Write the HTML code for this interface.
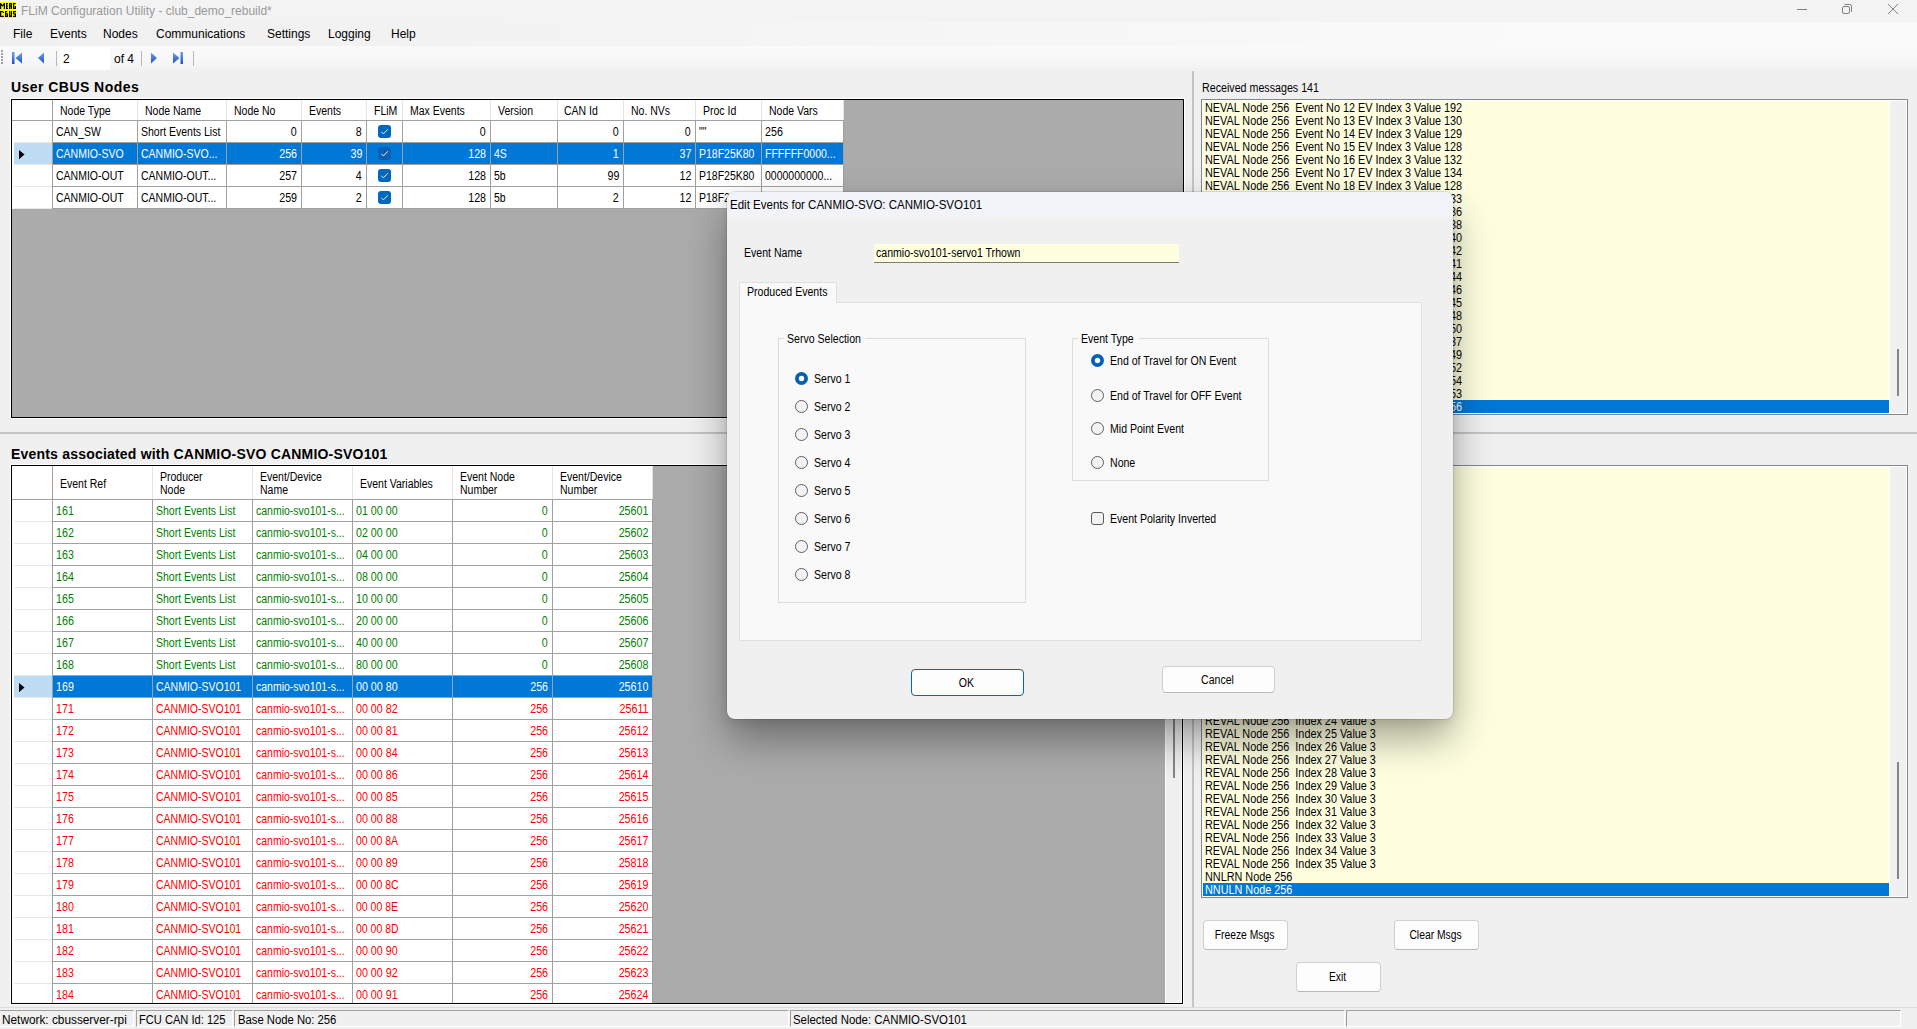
<!DOCTYPE html><html><head><meta charset="utf-8"><style>
*{box-sizing:border-box}
html,body{margin:0;padding:0}
body{width:1917px;height:1029px;position:relative;overflow:hidden;background:#f0f0f0;font-family:"Liberation Sans",sans-serif}
.t{position:absolute;white-space:pre;line-height:1}
.r{position:absolute}
</style></head><body><div class="r" style="left:0px;top:0px;width:1917px;height:22px;background:#f3f3f3;"></div>
<svg class="r" style="left:0;top:2px" width="16" height="16" viewBox="0 2 16 16"><rect x="0" y="2" width="16" height="16" fill="#ffff00"/><g fill="none" stroke="#000" stroke-width="1.25"><path d="M0.6 3V9M4.4 3V9M0.6 3.6L2.5 5.8L4.4 3.6"/><path d="M6.6 3V9M6.6 3.6H8M6.6 6H7.8M6.6 8.4H8"/><path d="M9.6 3V9M11.4 3V9M9.6 3.6H11.4M9.6 6.2H11.4"/><path d="M13.6 3V9M13.6 3.6H15.6M13.6 8.4H15.4M15.4 6V9"/><path d="M0.6 11V17M0.6 11.6H3.2M0.6 16.4H3.8M3.4 12V13"/><path d="M5.6 11V17M5.6 11.6H7.2M5.6 13.9H7.6M5.6 16.4H7.6M7.4 13.5V17"/><path d="M9.6 11V17M11.4 11V17M9.6 16.4H11.4"/><path d="M13 11.6H16M13.6 11V14.2M13.6 13.9H15.4M15.4 13.5V17M13 16.4H15.6"/></g></svg>
<div class="t" style="left:21px;top:5px;font-size:12px;color:#999;">FLiM Configuration Utility - club_demo_rebuild*</div>
<div class="r" style="left:1797px;top:9px;width:10px;height:1px;background:#808080;"></div>
<svg class="r" style="left:1840px;top:2px" width="14" height="14" viewBox="0 0 14 14"><rect x="2.5" y="4.5" width="7" height="7" rx="1.5" fill="none" stroke="#808080" stroke-width="1"/><path d="M4.5 2.5H9.8A1.7 1.7 0 0 1 11.5 4.2V9.8" fill="none" stroke="#808080" stroke-width="1"/></svg>
<svg class="r" style="left:1886px;top:2px" width="14" height="14" viewBox="0 0 14 14"><path d="M2 2L12 12M12 2L2 12" stroke="#808080" stroke-width="1"/></svg>
<div class="r" style="left:0px;top:22px;width:1917px;height:24px;background:linear-gradient(to right,#f0f0f0,#f3f3f3 30%,#fafafa 80%);"></div>
<div class="t" style="left:13px;top:28px;font-size:12px;color:#000;">File</div>
<div class="t" style="left:50px;top:28px;font-size:12px;color:#000;">Events</div>
<div class="t" style="left:103px;top:28px;font-size:12px;color:#000;">Nodes</div>
<div class="t" style="left:156px;top:28px;font-size:12px;color:#000;">Communications</div>
<div class="t" style="left:267px;top:28px;font-size:12px;color:#000;">Settings</div>
<div class="t" style="left:328px;top:28px;font-size:12px;color:#000;">Logging</div>
<div class="t" style="left:391px;top:28px;font-size:12px;color:#000;">Help</div>
<div class="r" style="left:0px;top:46px;width:1917px;height:25px;background:linear-gradient(to bottom,#fafafa,#f7f7f7 60%,#f0f0f0);"></div>
<div class="r" style="left:1px;top:50px;width:2px;height:2px;background:#a0a0a0;"></div>
<div class="r" style="left:1px;top:53px;width:2px;height:2px;background:#a0a0a0;"></div>
<div class="r" style="left:1px;top:56px;width:2px;height:2px;background:#a0a0a0;"></div>
<div class="r" style="left:1px;top:59px;width:2px;height:2px;background:#a0a0a0;"></div>
<div class="r" style="left:1px;top:62px;width:2px;height:2px;background:#a0a0a0;"></div>
<svg class="r" style="left:11px;top:51px" width="12" height="14" viewBox="0 0 12 14"><defs><linearGradient id="bg1" x1="0" y1="0" x2="0" y2="1"><stop offset="0" stop-color="#6fa0f0"/><stop offset="1" stop-color="#1f50c8"/></linearGradient></defs><rect x="1" y="1" width="2.5" height="12" fill="url(#bg1)"/><path d="M11 1.5V12.5L4.5 7Z" fill="url(#bg1)"/></svg>
<svg class="r" style="left:37px;top:51px" width="9" height="14" viewBox="0 0 9 14"><path d="M7 1.5V12.5L1 7Z" fill="url(#bg1)"/></svg>
<div class="r" style="left:56px;top:51px;width:1px;height:15px;background:#b8b8b8;"></div>
<div class="r" style="left:60px;top:47px;width:50px;height:23px;background:#ffffff;"></div>
<div class="t" style="left:63px;top:53px;font-size:12px;color:#000;">2</div>
<div class="t" style="left:114px;top:53px;font-size:12px;color:#000;">of 4</div>
<div class="r" style="left:141px;top:51px;width:1px;height:15px;background:#b8b8b8;"></div>
<svg class="r" style="left:150px;top:51px" width="9" height="14" viewBox="0 0 9 14"><path d="M1 1.5V12.5L7 7Z" fill="url(#bg1)"/></svg>
<svg class="r" style="left:172px;top:51px" width="12" height="14" viewBox="0 0 12 14"><rect x="8.5" y="1" width="2.5" height="12" fill="url(#bg1)"/><path d="M1 1.5V12.5L7.5 7Z" fill="url(#bg1)"/></svg>
<div class="r" style="left:193px;top:51px;width:1px;height:15px;background:#b8b8b8;"></div>
<div class="r" style="left:1192px;top:71px;width:2px;height:936px;background:#c4c4c4;"></div>
<div class="r" style="left:0px;top:432px;width:1192px;height:2px;background:#c4c4c4;"></div>
<div class="r" style="left:1194px;top:432px;width:723px;height:2px;background:#c4c4c4;"></div>
<div class="t" style="left:11px;top:80px;font-size:14px;color:#000;font-weight:bold;letter-spacing:0.45px;">User CBUS Nodes</div>
<div class="r" style="left:10px;top:98px;width:1175px;height:321px;background:#ffffff;"></div>
<div class="r" style="left:11px;top:99px;width:1173px;height:319px;background:#000;"></div>
<div class="r" style="left:12px;top:100px;width:1171px;height:317px;background:#ababab;"></div>
<div class="r" style="left:12px;top:100px;width:832px;height:20px;background:#ffffff;"></div>
<div class="r" style="left:12px;top:120px;width:832px;height:1px;background:#a0a0a0;"></div>
<div class="r" style="left:52px;top:100px;width:1px;height:20px;background:#a0a0a0;"></div>
<div class="r" style="left:137px;top:100px;width:1px;height:20px;background:#e5e5e5;"></div>
<div class="r" style="left:226px;top:100px;width:1px;height:20px;background:#e5e5e5;"></div>
<div class="r" style="left:301px;top:100px;width:1px;height:20px;background:#e5e5e5;"></div>
<div class="r" style="left:366px;top:100px;width:1px;height:20px;background:#e5e5e5;"></div>
<div class="r" style="left:402px;top:100px;width:1px;height:20px;background:#e5e5e5;"></div>
<div class="r" style="left:490px;top:100px;width:1px;height:20px;background:#e5e5e5;"></div>
<div class="r" style="left:557px;top:100px;width:1px;height:20px;background:#e5e5e5;"></div>
<div class="r" style="left:623px;top:100px;width:1px;height:20px;background:#e5e5e5;"></div>
<div class="r" style="left:695px;top:100px;width:1px;height:20px;background:#e5e5e5;"></div>
<div class="r" style="left:761px;top:100px;width:1px;height:20px;background:#e5e5e5;"></div>
<div class="r" style="left:843px;top:100px;width:1px;height:20px;background:#e5e5e5;"></div>
<div class="r" style="left:12px;top:121px;width:40px;height:22px;background:#ffffff;"></div>
<div class="r" style="left:14px;top:142px;width:38px;height:1px;background:#e8e8e8;"></div>
<div class="r" style="left:53px;top:121px;width:791px;height:22px;background:#ffffff;"></div>
<div class="r" style="left:52px;top:142px;width:792px;height:1px;background:#a0a0a0;"></div>
<div class="r" style="left:52px;top:121px;width:1px;height:22px;background:#a0a0a0;"></div>
<div class="r" style="left:137px;top:121px;width:1px;height:22px;background:#a0a0a0;"></div>
<div class="r" style="left:226px;top:121px;width:1px;height:22px;background:#a0a0a0;"></div>
<div class="r" style="left:301px;top:121px;width:1px;height:22px;background:#a0a0a0;"></div>
<div class="r" style="left:366px;top:121px;width:1px;height:22px;background:#a0a0a0;"></div>
<div class="r" style="left:402px;top:121px;width:1px;height:22px;background:#a0a0a0;"></div>
<div class="r" style="left:490px;top:121px;width:1px;height:22px;background:#a0a0a0;"></div>
<div class="r" style="left:557px;top:121px;width:1px;height:22px;background:#a0a0a0;"></div>
<div class="r" style="left:623px;top:121px;width:1px;height:22px;background:#a0a0a0;"></div>
<div class="r" style="left:695px;top:121px;width:1px;height:22px;background:#a0a0a0;"></div>
<div class="r" style="left:761px;top:121px;width:1px;height:22px;background:#a0a0a0;"></div>
<div class="r" style="left:843px;top:121px;width:1px;height:22px;background:#a0a0a0;"></div>
<div class="t" style="left:56px;top:126px;font-size:12px;color:#000;transform:scaleX(0.875);transform-origin:0 0;">CAN_SW</div>
<div class="t" style="left:141px;top:126px;font-size:12px;color:#000;transform:scaleX(0.875);transform-origin:0 0;">Short Events List</div>
<div class="t" style="right:1620px;top:126px;font-size:12px;color:#000;transform:scaleX(0.89);transform-origin:100% 0;">0</div>
<div class="t" style="right:1555px;top:126px;font-size:12px;color:#000;transform:scaleX(0.89);transform-origin:100% 0;">8</div>
<svg class="r" style="left:378px;top:125px" width="13" height="13" viewBox="0 0 13 13"><rect x="0" y="0" width="13" height="13" rx="3" fill="#0067c0"/><path d="M3.3 6.8L5.4 8.9L9.8 4.3" fill="none" stroke="#fff" stroke-width="0.9"/></svg>
<div class="t" style="right:1431px;top:126px;font-size:12px;color:#000;transform:scaleX(0.89);transform-origin:100% 0;">0</div>
<div class="t" style="left:494px;top:126px;font-size:12px;color:#000;transform:scaleX(0.875);transform-origin:0 0;"></div>
<div class="t" style="right:1298px;top:126px;font-size:12px;color:#000;transform:scaleX(0.89);transform-origin:100% 0;">0</div>
<div class="t" style="right:1226px;top:126px;font-size:12px;color:#000;transform:scaleX(0.89);transform-origin:100% 0;">0</div>
<div class="t" style="left:699px;top:126px;font-size:12px;color:#000;transform:scaleX(0.875);transform-origin:0 0;">""</div>
<div class="t" style="left:765px;top:126px;font-size:12px;color:#000;transform:scaleX(0.89);transform-origin:0 0;">256</div>
<div class="r" style="left:12px;top:143px;width:40px;height:22px;background:#ffffff;"></div>
<div class="r" style="left:14px;top:143px;width:38px;height:21px;background:#bedcf3;"></div>
<svg class="r" style="left:19px;top:150px" width="6" height="10" viewBox="0 0 6 10"><path d="M0 0L5.5 4.6L0 9.2Z" fill="#000"/></svg>
<div class="r" style="left:14px;top:164px;width:38px;height:1px;background:#e8e8e8;"></div>
<div class="r" style="left:53px;top:143px;width:791px;height:22px;background:#0078d7;"></div>
<div class="r" style="left:52px;top:164px;width:792px;height:1px;background:#a0a0a0;"></div>
<div class="r" style="left:52px;top:143px;width:1px;height:22px;background:#a0a0a0;"></div>
<div class="r" style="left:137px;top:143px;width:1px;height:22px;background:#a0a0a0;"></div>
<div class="r" style="left:226px;top:143px;width:1px;height:22px;background:#a0a0a0;"></div>
<div class="r" style="left:301px;top:143px;width:1px;height:22px;background:#a0a0a0;"></div>
<div class="r" style="left:366px;top:143px;width:1px;height:22px;background:#a0a0a0;"></div>
<div class="r" style="left:402px;top:143px;width:1px;height:22px;background:#a0a0a0;"></div>
<div class="r" style="left:490px;top:143px;width:1px;height:22px;background:#a0a0a0;"></div>
<div class="r" style="left:557px;top:143px;width:1px;height:22px;background:#a0a0a0;"></div>
<div class="r" style="left:623px;top:143px;width:1px;height:22px;background:#a0a0a0;"></div>
<div class="r" style="left:695px;top:143px;width:1px;height:22px;background:#a0a0a0;"></div>
<div class="r" style="left:761px;top:143px;width:1px;height:22px;background:#a0a0a0;"></div>
<div class="r" style="left:843px;top:143px;width:1px;height:22px;background:#a0a0a0;"></div>
<div class="t" style="left:56px;top:148px;font-size:12px;color:#ffffff;transform:scaleX(0.875);transform-origin:0 0;">CANMIO-SVO</div>
<div class="t" style="left:141px;top:148px;font-size:12px;color:#ffffff;transform:scaleX(0.875);transform-origin:0 0;">CANMIO-SVO...</div>
<div class="t" style="right:1620px;top:148px;font-size:12px;color:#ffffff;transform:scaleX(0.89);transform-origin:100% 0;">256</div>
<div class="t" style="right:1555px;top:148px;font-size:12px;color:#ffffff;transform:scaleX(0.89);transform-origin:100% 0;">39</div>
<svg class="r" style="left:378px;top:147px" width="13" height="13" viewBox="0 0 13 13"><rect x="0" y="0" width="13" height="13" rx="3" fill="#0a5fb4"/><path d="M3.3 6.8L5.4 8.9L9.8 4.3" fill="none" stroke="#fff" stroke-width="0.9"/></svg>
<div class="t" style="right:1431px;top:148px;font-size:12px;color:#ffffff;transform:scaleX(0.89);transform-origin:100% 0;">128</div>
<div class="t" style="left:494px;top:148px;font-size:12px;color:#ffffff;transform:scaleX(0.875);transform-origin:0 0;">4S</div>
<div class="t" style="right:1298px;top:148px;font-size:12px;color:#ffffff;transform:scaleX(0.89);transform-origin:100% 0;">1</div>
<div class="t" style="right:1226px;top:148px;font-size:12px;color:#ffffff;transform:scaleX(0.89);transform-origin:100% 0;">37</div>
<div class="t" style="left:699px;top:148px;font-size:12px;color:#ffffff;transform:scaleX(0.875);transform-origin:0 0;">P18F25K80</div>
<div class="t" style="left:765px;top:148px;font-size:12px;color:#ffffff;transform:scaleX(0.875);transform-origin:0 0;">FFFFFF0000...</div>
<div class="r" style="left:12px;top:165px;width:40px;height:22px;background:#ffffff;"></div>
<div class="r" style="left:14px;top:186px;width:38px;height:1px;background:#e8e8e8;"></div>
<div class="r" style="left:53px;top:165px;width:791px;height:22px;background:#ffffff;"></div>
<div class="r" style="left:52px;top:186px;width:792px;height:1px;background:#a0a0a0;"></div>
<div class="r" style="left:52px;top:165px;width:1px;height:22px;background:#a0a0a0;"></div>
<div class="r" style="left:137px;top:165px;width:1px;height:22px;background:#a0a0a0;"></div>
<div class="r" style="left:226px;top:165px;width:1px;height:22px;background:#a0a0a0;"></div>
<div class="r" style="left:301px;top:165px;width:1px;height:22px;background:#a0a0a0;"></div>
<div class="r" style="left:366px;top:165px;width:1px;height:22px;background:#a0a0a0;"></div>
<div class="r" style="left:402px;top:165px;width:1px;height:22px;background:#a0a0a0;"></div>
<div class="r" style="left:490px;top:165px;width:1px;height:22px;background:#a0a0a0;"></div>
<div class="r" style="left:557px;top:165px;width:1px;height:22px;background:#a0a0a0;"></div>
<div class="r" style="left:623px;top:165px;width:1px;height:22px;background:#a0a0a0;"></div>
<div class="r" style="left:695px;top:165px;width:1px;height:22px;background:#a0a0a0;"></div>
<div class="r" style="left:761px;top:165px;width:1px;height:22px;background:#a0a0a0;"></div>
<div class="r" style="left:843px;top:165px;width:1px;height:22px;background:#a0a0a0;"></div>
<div class="t" style="left:56px;top:170px;font-size:12px;color:#000;transform:scaleX(0.875);transform-origin:0 0;">CANMIO-OUT</div>
<div class="t" style="left:141px;top:170px;font-size:12px;color:#000;transform:scaleX(0.875);transform-origin:0 0;">CANMIO-OUT...</div>
<div class="t" style="right:1620px;top:170px;font-size:12px;color:#000;transform:scaleX(0.89);transform-origin:100% 0;">257</div>
<div class="t" style="right:1555px;top:170px;font-size:12px;color:#000;transform:scaleX(0.89);transform-origin:100% 0;">4</div>
<svg class="r" style="left:378px;top:169px" width="13" height="13" viewBox="0 0 13 13"><rect x="0" y="0" width="13" height="13" rx="3" fill="#0067c0"/><path d="M3.3 6.8L5.4 8.9L9.8 4.3" fill="none" stroke="#fff" stroke-width="0.9"/></svg>
<div class="t" style="right:1431px;top:170px;font-size:12px;color:#000;transform:scaleX(0.89);transform-origin:100% 0;">128</div>
<div class="t" style="left:494px;top:170px;font-size:12px;color:#000;transform:scaleX(0.875);transform-origin:0 0;">5b</div>
<div class="t" style="right:1298px;top:170px;font-size:12px;color:#000;transform:scaleX(0.89);transform-origin:100% 0;">99</div>
<div class="t" style="right:1226px;top:170px;font-size:12px;color:#000;transform:scaleX(0.89);transform-origin:100% 0;">12</div>
<div class="t" style="left:699px;top:170px;font-size:12px;color:#000;transform:scaleX(0.875);transform-origin:0 0;">P18F25K80</div>
<div class="t" style="left:765px;top:170px;font-size:12px;color:#000;transform:scaleX(0.875);transform-origin:0 0;">0000000000...</div>
<div class="r" style="left:12px;top:187px;width:40px;height:22px;background:#ffffff;"></div>
<div class="r" style="left:14px;top:208px;width:38px;height:1px;background:#e8e8e8;"></div>
<div class="r" style="left:53px;top:187px;width:791px;height:22px;background:#ffffff;"></div>
<div class="r" style="left:52px;top:208px;width:792px;height:1px;background:#a0a0a0;"></div>
<div class="r" style="left:52px;top:187px;width:1px;height:22px;background:#a0a0a0;"></div>
<div class="r" style="left:137px;top:187px;width:1px;height:22px;background:#a0a0a0;"></div>
<div class="r" style="left:226px;top:187px;width:1px;height:22px;background:#a0a0a0;"></div>
<div class="r" style="left:301px;top:187px;width:1px;height:22px;background:#a0a0a0;"></div>
<div class="r" style="left:366px;top:187px;width:1px;height:22px;background:#a0a0a0;"></div>
<div class="r" style="left:402px;top:187px;width:1px;height:22px;background:#a0a0a0;"></div>
<div class="r" style="left:490px;top:187px;width:1px;height:22px;background:#a0a0a0;"></div>
<div class="r" style="left:557px;top:187px;width:1px;height:22px;background:#a0a0a0;"></div>
<div class="r" style="left:623px;top:187px;width:1px;height:22px;background:#a0a0a0;"></div>
<div class="r" style="left:695px;top:187px;width:1px;height:22px;background:#a0a0a0;"></div>
<div class="r" style="left:761px;top:187px;width:1px;height:22px;background:#a0a0a0;"></div>
<div class="r" style="left:843px;top:187px;width:1px;height:22px;background:#a0a0a0;"></div>
<div class="t" style="left:56px;top:192px;font-size:12px;color:#000;transform:scaleX(0.875);transform-origin:0 0;">CANMIO-OUT</div>
<div class="t" style="left:141px;top:192px;font-size:12px;color:#000;transform:scaleX(0.875);transform-origin:0 0;">CANMIO-OUT...</div>
<div class="t" style="right:1620px;top:192px;font-size:12px;color:#000;transform:scaleX(0.89);transform-origin:100% 0;">259</div>
<div class="t" style="right:1555px;top:192px;font-size:12px;color:#000;transform:scaleX(0.89);transform-origin:100% 0;">2</div>
<svg class="r" style="left:378px;top:191px" width="13" height="13" viewBox="0 0 13 13"><rect x="0" y="0" width="13" height="13" rx="3" fill="#0067c0"/><path d="M3.3 6.8L5.4 8.9L9.8 4.3" fill="none" stroke="#fff" stroke-width="0.9"/></svg>
<div class="t" style="right:1431px;top:192px;font-size:12px;color:#000;transform:scaleX(0.89);transform-origin:100% 0;">128</div>
<div class="t" style="left:494px;top:192px;font-size:12px;color:#000;transform:scaleX(0.875);transform-origin:0 0;">5b</div>
<div class="t" style="right:1298px;top:192px;font-size:12px;color:#000;transform:scaleX(0.89);transform-origin:100% 0;">2</div>
<div class="t" style="right:1226px;top:192px;font-size:12px;color:#000;transform:scaleX(0.89);transform-origin:100% 0;">12</div>
<div class="t" style="left:699px;top:192px;font-size:12px;color:#000;transform:scaleX(0.875);transform-origin:0 0;">P18F25K80</div>
<div class="t" style="left:765px;top:192px;font-size:12px;color:#000;transform:scaleX(0.875);transform-origin:0 0;">0000000000...</div>
<div class="t" style="left:60px;top:105px;font-size:12px;color:#000;transform:scaleX(0.875);transform-origin:0 0;">Node Type</div>
<div class="t" style="left:145px;top:105px;font-size:12px;color:#000;transform:scaleX(0.875);transform-origin:0 0;">Node Name</div>
<div class="t" style="left:234px;top:105px;font-size:12px;color:#000;transform:scaleX(0.875);transform-origin:0 0;">Node No</div>
<div class="t" style="left:309px;top:105px;font-size:12px;color:#000;transform:scaleX(0.875);transform-origin:0 0;">Events</div>
<div class="t" style="left:374px;top:105px;font-size:12px;color:#000;transform:scaleX(0.875);transform-origin:0 0;">FLiM</div>
<div class="t" style="left:410px;top:105px;font-size:12px;color:#000;transform:scaleX(0.875);transform-origin:0 0;">Max Events</div>
<div class="t" style="left:498px;top:105px;font-size:12px;color:#000;transform:scaleX(0.875);transform-origin:0 0;">Version</div>
<div class="t" style="left:564px;top:105px;font-size:12px;color:#000;transform:scaleX(0.875);transform-origin:0 0;">CAN Id</div>
<div class="t" style="left:631px;top:105px;font-size:12px;color:#000;transform:scaleX(0.875);transform-origin:0 0;">No. NVs</div>
<div class="t" style="left:703px;top:105px;font-size:12px;color:#000;transform:scaleX(0.875);transform-origin:0 0;">Proc Id</div>
<div class="t" style="left:769px;top:105px;font-size:12px;color:#000;transform:scaleX(0.875);transform-origin:0 0;">Node Vars</div>
<div class="t" style="left:11px;top:447px;font-size:14px;color:#000;font-weight:bold;letter-spacing:0.2px;">Events associated with CANMIO-SVO CANMIO-SVO101</div>
<div class="r" style="left:10px;top:464px;width:1174px;height:541px;background:#ffffff;"></div>
<div class="r" style="left:11px;top:465px;width:1172px;height:539px;background:#000;"></div>
<div class="r" style="left:12px;top:466px;width:1170px;height:537px;background:#ababab;"></div>
<div class="r" style="left:12px;top:466px;width:641px;height:33px;background:#ffffff;"></div>
<div class="r" style="left:12px;top:499px;width:641px;height:1px;background:#a0a0a0;"></div>
<div class="r" style="left:52px;top:466px;width:1px;height:33px;background:#a0a0a0;"></div>
<div class="r" style="left:152px;top:466px;width:1px;height:33px;background:#e5e5e5;"></div>
<div class="r" style="left:252px;top:466px;width:1px;height:33px;background:#e5e5e5;"></div>
<div class="r" style="left:352px;top:466px;width:1px;height:33px;background:#e5e5e5;"></div>
<div class="r" style="left:452px;top:466px;width:1px;height:33px;background:#e5e5e5;"></div>
<div class="r" style="left:552px;top:466px;width:1px;height:33px;background:#e5e5e5;"></div>
<div class="r" style="left:652px;top:466px;width:1px;height:33px;background:#e5e5e5;"></div>
<div class="r" style="left:12px;top:500px;width:40px;height:22px;background:#ffffff;"></div>
<div class="r" style="left:14px;top:521px;width:38px;height:1px;background:#e8e8e8;"></div>
<div class="r" style="left:53px;top:500px;width:600px;height:22px;background:#ffffff;"></div>
<div class="r" style="left:52px;top:521px;width:601px;height:1px;background:#a0a0a0;"></div>
<div class="r" style="left:52px;top:500px;width:1px;height:22px;background:#a0a0a0;"></div>
<div class="r" style="left:152px;top:500px;width:1px;height:22px;background:#a0a0a0;"></div>
<div class="r" style="left:252px;top:500px;width:1px;height:22px;background:#a0a0a0;"></div>
<div class="r" style="left:352px;top:500px;width:1px;height:22px;background:#a0a0a0;"></div>
<div class="r" style="left:452px;top:500px;width:1px;height:22px;background:#a0a0a0;"></div>
<div class="r" style="left:552px;top:500px;width:1px;height:22px;background:#a0a0a0;"></div>
<div class="r" style="left:652px;top:500px;width:1px;height:22px;background:#a0a0a0;"></div>
<div class="t" style="left:56px;top:505px;font-size:12px;color:#008000;transform:scaleX(0.89);transform-origin:0 0;">161</div>
<div class="t" style="left:156px;top:505px;font-size:12px;color:#008000;transform:scaleX(0.875);transform-origin:0 0;">Short Events List</div>
<div class="t" style="left:256px;top:505px;font-size:12px;color:#008000;transform:scaleX(0.875);transform-origin:0 0;">canmio-svo101-s...</div>
<div class="t" style="left:356px;top:505px;font-size:12px;color:#008000;transform:scaleX(0.89);transform-origin:0 0;">01 00 00</div>
<div class="t" style="right:1369px;top:505px;font-size:12px;color:#008000;transform:scaleX(0.89);transform-origin:100% 0;">0</div>
<div class="t" style="right:1269px;top:505px;font-size:12px;color:#008000;transform:scaleX(0.89);transform-origin:100% 0;">25601</div>
<div class="r" style="left:12px;top:522px;width:40px;height:22px;background:#ffffff;"></div>
<div class="r" style="left:14px;top:543px;width:38px;height:1px;background:#e8e8e8;"></div>
<div class="r" style="left:53px;top:522px;width:600px;height:22px;background:#ffffff;"></div>
<div class="r" style="left:52px;top:543px;width:601px;height:1px;background:#a0a0a0;"></div>
<div class="r" style="left:52px;top:522px;width:1px;height:22px;background:#a0a0a0;"></div>
<div class="r" style="left:152px;top:522px;width:1px;height:22px;background:#a0a0a0;"></div>
<div class="r" style="left:252px;top:522px;width:1px;height:22px;background:#a0a0a0;"></div>
<div class="r" style="left:352px;top:522px;width:1px;height:22px;background:#a0a0a0;"></div>
<div class="r" style="left:452px;top:522px;width:1px;height:22px;background:#a0a0a0;"></div>
<div class="r" style="left:552px;top:522px;width:1px;height:22px;background:#a0a0a0;"></div>
<div class="r" style="left:652px;top:522px;width:1px;height:22px;background:#a0a0a0;"></div>
<div class="t" style="left:56px;top:527px;font-size:12px;color:#008000;transform:scaleX(0.89);transform-origin:0 0;">162</div>
<div class="t" style="left:156px;top:527px;font-size:12px;color:#008000;transform:scaleX(0.875);transform-origin:0 0;">Short Events List</div>
<div class="t" style="left:256px;top:527px;font-size:12px;color:#008000;transform:scaleX(0.875);transform-origin:0 0;">canmio-svo101-s...</div>
<div class="t" style="left:356px;top:527px;font-size:12px;color:#008000;transform:scaleX(0.89);transform-origin:0 0;">02 00 00</div>
<div class="t" style="right:1369px;top:527px;font-size:12px;color:#008000;transform:scaleX(0.89);transform-origin:100% 0;">0</div>
<div class="t" style="right:1269px;top:527px;font-size:12px;color:#008000;transform:scaleX(0.89);transform-origin:100% 0;">25602</div>
<div class="r" style="left:12px;top:544px;width:40px;height:22px;background:#ffffff;"></div>
<div class="r" style="left:14px;top:565px;width:38px;height:1px;background:#e8e8e8;"></div>
<div class="r" style="left:53px;top:544px;width:600px;height:22px;background:#ffffff;"></div>
<div class="r" style="left:52px;top:565px;width:601px;height:1px;background:#a0a0a0;"></div>
<div class="r" style="left:52px;top:544px;width:1px;height:22px;background:#a0a0a0;"></div>
<div class="r" style="left:152px;top:544px;width:1px;height:22px;background:#a0a0a0;"></div>
<div class="r" style="left:252px;top:544px;width:1px;height:22px;background:#a0a0a0;"></div>
<div class="r" style="left:352px;top:544px;width:1px;height:22px;background:#a0a0a0;"></div>
<div class="r" style="left:452px;top:544px;width:1px;height:22px;background:#a0a0a0;"></div>
<div class="r" style="left:552px;top:544px;width:1px;height:22px;background:#a0a0a0;"></div>
<div class="r" style="left:652px;top:544px;width:1px;height:22px;background:#a0a0a0;"></div>
<div class="t" style="left:56px;top:549px;font-size:12px;color:#008000;transform:scaleX(0.89);transform-origin:0 0;">163</div>
<div class="t" style="left:156px;top:549px;font-size:12px;color:#008000;transform:scaleX(0.875);transform-origin:0 0;">Short Events List</div>
<div class="t" style="left:256px;top:549px;font-size:12px;color:#008000;transform:scaleX(0.875);transform-origin:0 0;">canmio-svo101-s...</div>
<div class="t" style="left:356px;top:549px;font-size:12px;color:#008000;transform:scaleX(0.89);transform-origin:0 0;">04 00 00</div>
<div class="t" style="right:1369px;top:549px;font-size:12px;color:#008000;transform:scaleX(0.89);transform-origin:100% 0;">0</div>
<div class="t" style="right:1269px;top:549px;font-size:12px;color:#008000;transform:scaleX(0.89);transform-origin:100% 0;">25603</div>
<div class="r" style="left:12px;top:566px;width:40px;height:22px;background:#ffffff;"></div>
<div class="r" style="left:14px;top:587px;width:38px;height:1px;background:#e8e8e8;"></div>
<div class="r" style="left:53px;top:566px;width:600px;height:22px;background:#ffffff;"></div>
<div class="r" style="left:52px;top:587px;width:601px;height:1px;background:#a0a0a0;"></div>
<div class="r" style="left:52px;top:566px;width:1px;height:22px;background:#a0a0a0;"></div>
<div class="r" style="left:152px;top:566px;width:1px;height:22px;background:#a0a0a0;"></div>
<div class="r" style="left:252px;top:566px;width:1px;height:22px;background:#a0a0a0;"></div>
<div class="r" style="left:352px;top:566px;width:1px;height:22px;background:#a0a0a0;"></div>
<div class="r" style="left:452px;top:566px;width:1px;height:22px;background:#a0a0a0;"></div>
<div class="r" style="left:552px;top:566px;width:1px;height:22px;background:#a0a0a0;"></div>
<div class="r" style="left:652px;top:566px;width:1px;height:22px;background:#a0a0a0;"></div>
<div class="t" style="left:56px;top:571px;font-size:12px;color:#008000;transform:scaleX(0.89);transform-origin:0 0;">164</div>
<div class="t" style="left:156px;top:571px;font-size:12px;color:#008000;transform:scaleX(0.875);transform-origin:0 0;">Short Events List</div>
<div class="t" style="left:256px;top:571px;font-size:12px;color:#008000;transform:scaleX(0.875);transform-origin:0 0;">canmio-svo101-s...</div>
<div class="t" style="left:356px;top:571px;font-size:12px;color:#008000;transform:scaleX(0.89);transform-origin:0 0;">08 00 00</div>
<div class="t" style="right:1369px;top:571px;font-size:12px;color:#008000;transform:scaleX(0.89);transform-origin:100% 0;">0</div>
<div class="t" style="right:1269px;top:571px;font-size:12px;color:#008000;transform:scaleX(0.89);transform-origin:100% 0;">25604</div>
<div class="r" style="left:12px;top:588px;width:40px;height:22px;background:#ffffff;"></div>
<div class="r" style="left:14px;top:609px;width:38px;height:1px;background:#e8e8e8;"></div>
<div class="r" style="left:53px;top:588px;width:600px;height:22px;background:#ffffff;"></div>
<div class="r" style="left:52px;top:609px;width:601px;height:1px;background:#a0a0a0;"></div>
<div class="r" style="left:52px;top:588px;width:1px;height:22px;background:#a0a0a0;"></div>
<div class="r" style="left:152px;top:588px;width:1px;height:22px;background:#a0a0a0;"></div>
<div class="r" style="left:252px;top:588px;width:1px;height:22px;background:#a0a0a0;"></div>
<div class="r" style="left:352px;top:588px;width:1px;height:22px;background:#a0a0a0;"></div>
<div class="r" style="left:452px;top:588px;width:1px;height:22px;background:#a0a0a0;"></div>
<div class="r" style="left:552px;top:588px;width:1px;height:22px;background:#a0a0a0;"></div>
<div class="r" style="left:652px;top:588px;width:1px;height:22px;background:#a0a0a0;"></div>
<div class="t" style="left:56px;top:593px;font-size:12px;color:#008000;transform:scaleX(0.89);transform-origin:0 0;">165</div>
<div class="t" style="left:156px;top:593px;font-size:12px;color:#008000;transform:scaleX(0.875);transform-origin:0 0;">Short Events List</div>
<div class="t" style="left:256px;top:593px;font-size:12px;color:#008000;transform:scaleX(0.875);transform-origin:0 0;">canmio-svo101-s...</div>
<div class="t" style="left:356px;top:593px;font-size:12px;color:#008000;transform:scaleX(0.89);transform-origin:0 0;">10 00 00</div>
<div class="t" style="right:1369px;top:593px;font-size:12px;color:#008000;transform:scaleX(0.89);transform-origin:100% 0;">0</div>
<div class="t" style="right:1269px;top:593px;font-size:12px;color:#008000;transform:scaleX(0.89);transform-origin:100% 0;">25605</div>
<div class="r" style="left:12px;top:610px;width:40px;height:22px;background:#ffffff;"></div>
<div class="r" style="left:14px;top:631px;width:38px;height:1px;background:#e8e8e8;"></div>
<div class="r" style="left:53px;top:610px;width:600px;height:22px;background:#ffffff;"></div>
<div class="r" style="left:52px;top:631px;width:601px;height:1px;background:#a0a0a0;"></div>
<div class="r" style="left:52px;top:610px;width:1px;height:22px;background:#a0a0a0;"></div>
<div class="r" style="left:152px;top:610px;width:1px;height:22px;background:#a0a0a0;"></div>
<div class="r" style="left:252px;top:610px;width:1px;height:22px;background:#a0a0a0;"></div>
<div class="r" style="left:352px;top:610px;width:1px;height:22px;background:#a0a0a0;"></div>
<div class="r" style="left:452px;top:610px;width:1px;height:22px;background:#a0a0a0;"></div>
<div class="r" style="left:552px;top:610px;width:1px;height:22px;background:#a0a0a0;"></div>
<div class="r" style="left:652px;top:610px;width:1px;height:22px;background:#a0a0a0;"></div>
<div class="t" style="left:56px;top:615px;font-size:12px;color:#008000;transform:scaleX(0.89);transform-origin:0 0;">166</div>
<div class="t" style="left:156px;top:615px;font-size:12px;color:#008000;transform:scaleX(0.875);transform-origin:0 0;">Short Events List</div>
<div class="t" style="left:256px;top:615px;font-size:12px;color:#008000;transform:scaleX(0.875);transform-origin:0 0;">canmio-svo101-s...</div>
<div class="t" style="left:356px;top:615px;font-size:12px;color:#008000;transform:scaleX(0.89);transform-origin:0 0;">20 00 00</div>
<div class="t" style="right:1369px;top:615px;font-size:12px;color:#008000;transform:scaleX(0.89);transform-origin:100% 0;">0</div>
<div class="t" style="right:1269px;top:615px;font-size:12px;color:#008000;transform:scaleX(0.89);transform-origin:100% 0;">25606</div>
<div class="r" style="left:12px;top:632px;width:40px;height:22px;background:#ffffff;"></div>
<div class="r" style="left:14px;top:653px;width:38px;height:1px;background:#e8e8e8;"></div>
<div class="r" style="left:53px;top:632px;width:600px;height:22px;background:#ffffff;"></div>
<div class="r" style="left:52px;top:653px;width:601px;height:1px;background:#a0a0a0;"></div>
<div class="r" style="left:52px;top:632px;width:1px;height:22px;background:#a0a0a0;"></div>
<div class="r" style="left:152px;top:632px;width:1px;height:22px;background:#a0a0a0;"></div>
<div class="r" style="left:252px;top:632px;width:1px;height:22px;background:#a0a0a0;"></div>
<div class="r" style="left:352px;top:632px;width:1px;height:22px;background:#a0a0a0;"></div>
<div class="r" style="left:452px;top:632px;width:1px;height:22px;background:#a0a0a0;"></div>
<div class="r" style="left:552px;top:632px;width:1px;height:22px;background:#a0a0a0;"></div>
<div class="r" style="left:652px;top:632px;width:1px;height:22px;background:#a0a0a0;"></div>
<div class="t" style="left:56px;top:637px;font-size:12px;color:#008000;transform:scaleX(0.89);transform-origin:0 0;">167</div>
<div class="t" style="left:156px;top:637px;font-size:12px;color:#008000;transform:scaleX(0.875);transform-origin:0 0;">Short Events List</div>
<div class="t" style="left:256px;top:637px;font-size:12px;color:#008000;transform:scaleX(0.875);transform-origin:0 0;">canmio-svo101-s...</div>
<div class="t" style="left:356px;top:637px;font-size:12px;color:#008000;transform:scaleX(0.89);transform-origin:0 0;">40 00 00</div>
<div class="t" style="right:1369px;top:637px;font-size:12px;color:#008000;transform:scaleX(0.89);transform-origin:100% 0;">0</div>
<div class="t" style="right:1269px;top:637px;font-size:12px;color:#008000;transform:scaleX(0.89);transform-origin:100% 0;">25607</div>
<div class="r" style="left:12px;top:654px;width:40px;height:22px;background:#ffffff;"></div>
<div class="r" style="left:14px;top:675px;width:38px;height:1px;background:#e8e8e8;"></div>
<div class="r" style="left:53px;top:654px;width:600px;height:22px;background:#ffffff;"></div>
<div class="r" style="left:52px;top:675px;width:601px;height:1px;background:#a0a0a0;"></div>
<div class="r" style="left:52px;top:654px;width:1px;height:22px;background:#a0a0a0;"></div>
<div class="r" style="left:152px;top:654px;width:1px;height:22px;background:#a0a0a0;"></div>
<div class="r" style="left:252px;top:654px;width:1px;height:22px;background:#a0a0a0;"></div>
<div class="r" style="left:352px;top:654px;width:1px;height:22px;background:#a0a0a0;"></div>
<div class="r" style="left:452px;top:654px;width:1px;height:22px;background:#a0a0a0;"></div>
<div class="r" style="left:552px;top:654px;width:1px;height:22px;background:#a0a0a0;"></div>
<div class="r" style="left:652px;top:654px;width:1px;height:22px;background:#a0a0a0;"></div>
<div class="t" style="left:56px;top:659px;font-size:12px;color:#008000;transform:scaleX(0.89);transform-origin:0 0;">168</div>
<div class="t" style="left:156px;top:659px;font-size:12px;color:#008000;transform:scaleX(0.875);transform-origin:0 0;">Short Events List</div>
<div class="t" style="left:256px;top:659px;font-size:12px;color:#008000;transform:scaleX(0.875);transform-origin:0 0;">canmio-svo101-s...</div>
<div class="t" style="left:356px;top:659px;font-size:12px;color:#008000;transform:scaleX(0.89);transform-origin:0 0;">80 00 00</div>
<div class="t" style="right:1369px;top:659px;font-size:12px;color:#008000;transform:scaleX(0.89);transform-origin:100% 0;">0</div>
<div class="t" style="right:1269px;top:659px;font-size:12px;color:#008000;transform:scaleX(0.89);transform-origin:100% 0;">25608</div>
<div class="r" style="left:12px;top:676px;width:40px;height:22px;background:#ffffff;"></div>
<div class="r" style="left:14px;top:676px;width:38px;height:21px;background:#bedcf3;"></div>
<svg class="r" style="left:19px;top:683px" width="6" height="10" viewBox="0 0 6 10"><path d="M0 0L5.5 4.6L0 9.2Z" fill="#000"/></svg>
<div class="r" style="left:14px;top:697px;width:38px;height:1px;background:#e8e8e8;"></div>
<div class="r" style="left:53px;top:676px;width:600px;height:22px;background:#0078d7;"></div>
<div class="r" style="left:52px;top:697px;width:601px;height:1px;background:#a0a0a0;"></div>
<div class="r" style="left:52px;top:676px;width:1px;height:22px;background:#a0a0a0;"></div>
<div class="r" style="left:152px;top:676px;width:1px;height:22px;background:#a0a0a0;"></div>
<div class="r" style="left:252px;top:676px;width:1px;height:22px;background:#a0a0a0;"></div>
<div class="r" style="left:352px;top:676px;width:1px;height:22px;background:#a0a0a0;"></div>
<div class="r" style="left:452px;top:676px;width:1px;height:22px;background:#a0a0a0;"></div>
<div class="r" style="left:552px;top:676px;width:1px;height:22px;background:#a0a0a0;"></div>
<div class="r" style="left:652px;top:676px;width:1px;height:22px;background:#a0a0a0;"></div>
<div class="t" style="left:56px;top:681px;font-size:12px;color:#ffffff;transform:scaleX(0.89);transform-origin:0 0;">169</div>
<div class="t" style="left:156px;top:681px;font-size:12px;color:#ffffff;transform:scaleX(0.875);transform-origin:0 0;">CANMIO-SVO101</div>
<div class="t" style="left:256px;top:681px;font-size:12px;color:#ffffff;transform:scaleX(0.875);transform-origin:0 0;">canmio-svo101-s...</div>
<div class="t" style="left:356px;top:681px;font-size:12px;color:#ffffff;transform:scaleX(0.89);transform-origin:0 0;">00 00 80</div>
<div class="t" style="right:1369px;top:681px;font-size:12px;color:#ffffff;transform:scaleX(0.89);transform-origin:100% 0;">256</div>
<div class="t" style="right:1269px;top:681px;font-size:12px;color:#ffffff;transform:scaleX(0.89);transform-origin:100% 0;">25610</div>
<div class="r" style="left:12px;top:698px;width:40px;height:22px;background:#ffffff;"></div>
<div class="r" style="left:14px;top:719px;width:38px;height:1px;background:#e8e8e8;"></div>
<div class="r" style="left:53px;top:698px;width:600px;height:22px;background:#ffffff;"></div>
<div class="r" style="left:52px;top:719px;width:601px;height:1px;background:#a0a0a0;"></div>
<div class="r" style="left:52px;top:698px;width:1px;height:22px;background:#a0a0a0;"></div>
<div class="r" style="left:152px;top:698px;width:1px;height:22px;background:#a0a0a0;"></div>
<div class="r" style="left:252px;top:698px;width:1px;height:22px;background:#a0a0a0;"></div>
<div class="r" style="left:352px;top:698px;width:1px;height:22px;background:#a0a0a0;"></div>
<div class="r" style="left:452px;top:698px;width:1px;height:22px;background:#a0a0a0;"></div>
<div class="r" style="left:552px;top:698px;width:1px;height:22px;background:#a0a0a0;"></div>
<div class="r" style="left:652px;top:698px;width:1px;height:22px;background:#a0a0a0;"></div>
<div class="t" style="left:56px;top:703px;font-size:12px;color:#ff0000;transform:scaleX(0.89);transform-origin:0 0;">171</div>
<div class="t" style="left:156px;top:703px;font-size:12px;color:#ff0000;transform:scaleX(0.875);transform-origin:0 0;">CANMIO-SVO101</div>
<div class="t" style="left:256px;top:703px;font-size:12px;color:#ff0000;transform:scaleX(0.875);transform-origin:0 0;">canmio-svo101-s...</div>
<div class="t" style="left:356px;top:703px;font-size:12px;color:#ff0000;transform:scaleX(0.89);transform-origin:0 0;">00 00 82</div>
<div class="t" style="right:1369px;top:703px;font-size:12px;color:#ff0000;transform:scaleX(0.89);transform-origin:100% 0;">256</div>
<div class="t" style="right:1269px;top:703px;font-size:12px;color:#ff0000;transform:scaleX(0.89);transform-origin:100% 0;">25611</div>
<div class="r" style="left:12px;top:720px;width:40px;height:22px;background:#ffffff;"></div>
<div class="r" style="left:14px;top:741px;width:38px;height:1px;background:#e8e8e8;"></div>
<div class="r" style="left:53px;top:720px;width:600px;height:22px;background:#ffffff;"></div>
<div class="r" style="left:52px;top:741px;width:601px;height:1px;background:#a0a0a0;"></div>
<div class="r" style="left:52px;top:720px;width:1px;height:22px;background:#a0a0a0;"></div>
<div class="r" style="left:152px;top:720px;width:1px;height:22px;background:#a0a0a0;"></div>
<div class="r" style="left:252px;top:720px;width:1px;height:22px;background:#a0a0a0;"></div>
<div class="r" style="left:352px;top:720px;width:1px;height:22px;background:#a0a0a0;"></div>
<div class="r" style="left:452px;top:720px;width:1px;height:22px;background:#a0a0a0;"></div>
<div class="r" style="left:552px;top:720px;width:1px;height:22px;background:#a0a0a0;"></div>
<div class="r" style="left:652px;top:720px;width:1px;height:22px;background:#a0a0a0;"></div>
<div class="t" style="left:56px;top:725px;font-size:12px;color:#ff0000;transform:scaleX(0.89);transform-origin:0 0;">172</div>
<div class="t" style="left:156px;top:725px;font-size:12px;color:#ff0000;transform:scaleX(0.875);transform-origin:0 0;">CANMIO-SVO101</div>
<div class="t" style="left:256px;top:725px;font-size:12px;color:#ff0000;transform:scaleX(0.875);transform-origin:0 0;">canmio-svo101-s...</div>
<div class="t" style="left:356px;top:725px;font-size:12px;color:#ff0000;transform:scaleX(0.89);transform-origin:0 0;">00 00 81</div>
<div class="t" style="right:1369px;top:725px;font-size:12px;color:#ff0000;transform:scaleX(0.89);transform-origin:100% 0;">256</div>
<div class="t" style="right:1269px;top:725px;font-size:12px;color:#ff0000;transform:scaleX(0.89);transform-origin:100% 0;">25612</div>
<div class="r" style="left:12px;top:742px;width:40px;height:22px;background:#ffffff;"></div>
<div class="r" style="left:14px;top:763px;width:38px;height:1px;background:#e8e8e8;"></div>
<div class="r" style="left:53px;top:742px;width:600px;height:22px;background:#ffffff;"></div>
<div class="r" style="left:52px;top:763px;width:601px;height:1px;background:#a0a0a0;"></div>
<div class="r" style="left:52px;top:742px;width:1px;height:22px;background:#a0a0a0;"></div>
<div class="r" style="left:152px;top:742px;width:1px;height:22px;background:#a0a0a0;"></div>
<div class="r" style="left:252px;top:742px;width:1px;height:22px;background:#a0a0a0;"></div>
<div class="r" style="left:352px;top:742px;width:1px;height:22px;background:#a0a0a0;"></div>
<div class="r" style="left:452px;top:742px;width:1px;height:22px;background:#a0a0a0;"></div>
<div class="r" style="left:552px;top:742px;width:1px;height:22px;background:#a0a0a0;"></div>
<div class="r" style="left:652px;top:742px;width:1px;height:22px;background:#a0a0a0;"></div>
<div class="t" style="left:56px;top:747px;font-size:12px;color:#ff0000;transform:scaleX(0.89);transform-origin:0 0;">173</div>
<div class="t" style="left:156px;top:747px;font-size:12px;color:#ff0000;transform:scaleX(0.875);transform-origin:0 0;">CANMIO-SVO101</div>
<div class="t" style="left:256px;top:747px;font-size:12px;color:#ff0000;transform:scaleX(0.875);transform-origin:0 0;">canmio-svo101-s...</div>
<div class="t" style="left:356px;top:747px;font-size:12px;color:#ff0000;transform:scaleX(0.89);transform-origin:0 0;">00 00 84</div>
<div class="t" style="right:1369px;top:747px;font-size:12px;color:#ff0000;transform:scaleX(0.89);transform-origin:100% 0;">256</div>
<div class="t" style="right:1269px;top:747px;font-size:12px;color:#ff0000;transform:scaleX(0.89);transform-origin:100% 0;">25613</div>
<div class="r" style="left:12px;top:764px;width:40px;height:22px;background:#ffffff;"></div>
<div class="r" style="left:14px;top:785px;width:38px;height:1px;background:#e8e8e8;"></div>
<div class="r" style="left:53px;top:764px;width:600px;height:22px;background:#ffffff;"></div>
<div class="r" style="left:52px;top:785px;width:601px;height:1px;background:#a0a0a0;"></div>
<div class="r" style="left:52px;top:764px;width:1px;height:22px;background:#a0a0a0;"></div>
<div class="r" style="left:152px;top:764px;width:1px;height:22px;background:#a0a0a0;"></div>
<div class="r" style="left:252px;top:764px;width:1px;height:22px;background:#a0a0a0;"></div>
<div class="r" style="left:352px;top:764px;width:1px;height:22px;background:#a0a0a0;"></div>
<div class="r" style="left:452px;top:764px;width:1px;height:22px;background:#a0a0a0;"></div>
<div class="r" style="left:552px;top:764px;width:1px;height:22px;background:#a0a0a0;"></div>
<div class="r" style="left:652px;top:764px;width:1px;height:22px;background:#a0a0a0;"></div>
<div class="t" style="left:56px;top:769px;font-size:12px;color:#ff0000;transform:scaleX(0.89);transform-origin:0 0;">174</div>
<div class="t" style="left:156px;top:769px;font-size:12px;color:#ff0000;transform:scaleX(0.875);transform-origin:0 0;">CANMIO-SVO101</div>
<div class="t" style="left:256px;top:769px;font-size:12px;color:#ff0000;transform:scaleX(0.875);transform-origin:0 0;">canmio-svo101-s...</div>
<div class="t" style="left:356px;top:769px;font-size:12px;color:#ff0000;transform:scaleX(0.89);transform-origin:0 0;">00 00 86</div>
<div class="t" style="right:1369px;top:769px;font-size:12px;color:#ff0000;transform:scaleX(0.89);transform-origin:100% 0;">256</div>
<div class="t" style="right:1269px;top:769px;font-size:12px;color:#ff0000;transform:scaleX(0.89);transform-origin:100% 0;">25614</div>
<div class="r" style="left:12px;top:786px;width:40px;height:22px;background:#ffffff;"></div>
<div class="r" style="left:14px;top:807px;width:38px;height:1px;background:#e8e8e8;"></div>
<div class="r" style="left:53px;top:786px;width:600px;height:22px;background:#ffffff;"></div>
<div class="r" style="left:52px;top:807px;width:601px;height:1px;background:#a0a0a0;"></div>
<div class="r" style="left:52px;top:786px;width:1px;height:22px;background:#a0a0a0;"></div>
<div class="r" style="left:152px;top:786px;width:1px;height:22px;background:#a0a0a0;"></div>
<div class="r" style="left:252px;top:786px;width:1px;height:22px;background:#a0a0a0;"></div>
<div class="r" style="left:352px;top:786px;width:1px;height:22px;background:#a0a0a0;"></div>
<div class="r" style="left:452px;top:786px;width:1px;height:22px;background:#a0a0a0;"></div>
<div class="r" style="left:552px;top:786px;width:1px;height:22px;background:#a0a0a0;"></div>
<div class="r" style="left:652px;top:786px;width:1px;height:22px;background:#a0a0a0;"></div>
<div class="t" style="left:56px;top:791px;font-size:12px;color:#ff0000;transform:scaleX(0.89);transform-origin:0 0;">175</div>
<div class="t" style="left:156px;top:791px;font-size:12px;color:#ff0000;transform:scaleX(0.875);transform-origin:0 0;">CANMIO-SVO101</div>
<div class="t" style="left:256px;top:791px;font-size:12px;color:#ff0000;transform:scaleX(0.875);transform-origin:0 0;">canmio-svo101-s...</div>
<div class="t" style="left:356px;top:791px;font-size:12px;color:#ff0000;transform:scaleX(0.89);transform-origin:0 0;">00 00 85</div>
<div class="t" style="right:1369px;top:791px;font-size:12px;color:#ff0000;transform:scaleX(0.89);transform-origin:100% 0;">256</div>
<div class="t" style="right:1269px;top:791px;font-size:12px;color:#ff0000;transform:scaleX(0.89);transform-origin:100% 0;">25615</div>
<div class="r" style="left:12px;top:808px;width:40px;height:22px;background:#ffffff;"></div>
<div class="r" style="left:14px;top:829px;width:38px;height:1px;background:#e8e8e8;"></div>
<div class="r" style="left:53px;top:808px;width:600px;height:22px;background:#ffffff;"></div>
<div class="r" style="left:52px;top:829px;width:601px;height:1px;background:#a0a0a0;"></div>
<div class="r" style="left:52px;top:808px;width:1px;height:22px;background:#a0a0a0;"></div>
<div class="r" style="left:152px;top:808px;width:1px;height:22px;background:#a0a0a0;"></div>
<div class="r" style="left:252px;top:808px;width:1px;height:22px;background:#a0a0a0;"></div>
<div class="r" style="left:352px;top:808px;width:1px;height:22px;background:#a0a0a0;"></div>
<div class="r" style="left:452px;top:808px;width:1px;height:22px;background:#a0a0a0;"></div>
<div class="r" style="left:552px;top:808px;width:1px;height:22px;background:#a0a0a0;"></div>
<div class="r" style="left:652px;top:808px;width:1px;height:22px;background:#a0a0a0;"></div>
<div class="t" style="left:56px;top:813px;font-size:12px;color:#ff0000;transform:scaleX(0.89);transform-origin:0 0;">176</div>
<div class="t" style="left:156px;top:813px;font-size:12px;color:#ff0000;transform:scaleX(0.875);transform-origin:0 0;">CANMIO-SVO101</div>
<div class="t" style="left:256px;top:813px;font-size:12px;color:#ff0000;transform:scaleX(0.875);transform-origin:0 0;">canmio-svo101-s...</div>
<div class="t" style="left:356px;top:813px;font-size:12px;color:#ff0000;transform:scaleX(0.89);transform-origin:0 0;">00 00 88</div>
<div class="t" style="right:1369px;top:813px;font-size:12px;color:#ff0000;transform:scaleX(0.89);transform-origin:100% 0;">256</div>
<div class="t" style="right:1269px;top:813px;font-size:12px;color:#ff0000;transform:scaleX(0.89);transform-origin:100% 0;">25616</div>
<div class="r" style="left:12px;top:830px;width:40px;height:22px;background:#ffffff;"></div>
<div class="r" style="left:14px;top:851px;width:38px;height:1px;background:#e8e8e8;"></div>
<div class="r" style="left:53px;top:830px;width:600px;height:22px;background:#ffffff;"></div>
<div class="r" style="left:52px;top:851px;width:601px;height:1px;background:#a0a0a0;"></div>
<div class="r" style="left:52px;top:830px;width:1px;height:22px;background:#a0a0a0;"></div>
<div class="r" style="left:152px;top:830px;width:1px;height:22px;background:#a0a0a0;"></div>
<div class="r" style="left:252px;top:830px;width:1px;height:22px;background:#a0a0a0;"></div>
<div class="r" style="left:352px;top:830px;width:1px;height:22px;background:#a0a0a0;"></div>
<div class="r" style="left:452px;top:830px;width:1px;height:22px;background:#a0a0a0;"></div>
<div class="r" style="left:552px;top:830px;width:1px;height:22px;background:#a0a0a0;"></div>
<div class="r" style="left:652px;top:830px;width:1px;height:22px;background:#a0a0a0;"></div>
<div class="t" style="left:56px;top:835px;font-size:12px;color:#ff0000;transform:scaleX(0.89);transform-origin:0 0;">177</div>
<div class="t" style="left:156px;top:835px;font-size:12px;color:#ff0000;transform:scaleX(0.875);transform-origin:0 0;">CANMIO-SVO101</div>
<div class="t" style="left:256px;top:835px;font-size:12px;color:#ff0000;transform:scaleX(0.875);transform-origin:0 0;">canmio-svo101-s...</div>
<div class="t" style="left:356px;top:835px;font-size:12px;color:#ff0000;transform:scaleX(0.875);transform-origin:0 0;">00 00 8A</div>
<div class="t" style="right:1369px;top:835px;font-size:12px;color:#ff0000;transform:scaleX(0.89);transform-origin:100% 0;">256</div>
<div class="t" style="right:1269px;top:835px;font-size:12px;color:#ff0000;transform:scaleX(0.89);transform-origin:100% 0;">25617</div>
<div class="r" style="left:12px;top:852px;width:40px;height:22px;background:#ffffff;"></div>
<div class="r" style="left:14px;top:873px;width:38px;height:1px;background:#e8e8e8;"></div>
<div class="r" style="left:53px;top:852px;width:600px;height:22px;background:#ffffff;"></div>
<div class="r" style="left:52px;top:873px;width:601px;height:1px;background:#a0a0a0;"></div>
<div class="r" style="left:52px;top:852px;width:1px;height:22px;background:#a0a0a0;"></div>
<div class="r" style="left:152px;top:852px;width:1px;height:22px;background:#a0a0a0;"></div>
<div class="r" style="left:252px;top:852px;width:1px;height:22px;background:#a0a0a0;"></div>
<div class="r" style="left:352px;top:852px;width:1px;height:22px;background:#a0a0a0;"></div>
<div class="r" style="left:452px;top:852px;width:1px;height:22px;background:#a0a0a0;"></div>
<div class="r" style="left:552px;top:852px;width:1px;height:22px;background:#a0a0a0;"></div>
<div class="r" style="left:652px;top:852px;width:1px;height:22px;background:#a0a0a0;"></div>
<div class="t" style="left:56px;top:857px;font-size:12px;color:#ff0000;transform:scaleX(0.89);transform-origin:0 0;">178</div>
<div class="t" style="left:156px;top:857px;font-size:12px;color:#ff0000;transform:scaleX(0.875);transform-origin:0 0;">CANMIO-SVO101</div>
<div class="t" style="left:256px;top:857px;font-size:12px;color:#ff0000;transform:scaleX(0.875);transform-origin:0 0;">canmio-svo101-s...</div>
<div class="t" style="left:356px;top:857px;font-size:12px;color:#ff0000;transform:scaleX(0.89);transform-origin:0 0;">00 00 89</div>
<div class="t" style="right:1369px;top:857px;font-size:12px;color:#ff0000;transform:scaleX(0.89);transform-origin:100% 0;">256</div>
<div class="t" style="right:1269px;top:857px;font-size:12px;color:#ff0000;transform:scaleX(0.89);transform-origin:100% 0;">25818</div>
<div class="r" style="left:12px;top:874px;width:40px;height:22px;background:#ffffff;"></div>
<div class="r" style="left:14px;top:895px;width:38px;height:1px;background:#e8e8e8;"></div>
<div class="r" style="left:53px;top:874px;width:600px;height:22px;background:#ffffff;"></div>
<div class="r" style="left:52px;top:895px;width:601px;height:1px;background:#a0a0a0;"></div>
<div class="r" style="left:52px;top:874px;width:1px;height:22px;background:#a0a0a0;"></div>
<div class="r" style="left:152px;top:874px;width:1px;height:22px;background:#a0a0a0;"></div>
<div class="r" style="left:252px;top:874px;width:1px;height:22px;background:#a0a0a0;"></div>
<div class="r" style="left:352px;top:874px;width:1px;height:22px;background:#a0a0a0;"></div>
<div class="r" style="left:452px;top:874px;width:1px;height:22px;background:#a0a0a0;"></div>
<div class="r" style="left:552px;top:874px;width:1px;height:22px;background:#a0a0a0;"></div>
<div class="r" style="left:652px;top:874px;width:1px;height:22px;background:#a0a0a0;"></div>
<div class="t" style="left:56px;top:879px;font-size:12px;color:#ff0000;transform:scaleX(0.89);transform-origin:0 0;">179</div>
<div class="t" style="left:156px;top:879px;font-size:12px;color:#ff0000;transform:scaleX(0.875);transform-origin:0 0;">CANMIO-SVO101</div>
<div class="t" style="left:256px;top:879px;font-size:12px;color:#ff0000;transform:scaleX(0.875);transform-origin:0 0;">canmio-svo101-s...</div>
<div class="t" style="left:356px;top:879px;font-size:12px;color:#ff0000;transform:scaleX(0.875);transform-origin:0 0;">00 00 8C</div>
<div class="t" style="right:1369px;top:879px;font-size:12px;color:#ff0000;transform:scaleX(0.89);transform-origin:100% 0;">256</div>
<div class="t" style="right:1269px;top:879px;font-size:12px;color:#ff0000;transform:scaleX(0.89);transform-origin:100% 0;">25619</div>
<div class="r" style="left:12px;top:896px;width:40px;height:22px;background:#ffffff;"></div>
<div class="r" style="left:14px;top:917px;width:38px;height:1px;background:#e8e8e8;"></div>
<div class="r" style="left:53px;top:896px;width:600px;height:22px;background:#ffffff;"></div>
<div class="r" style="left:52px;top:917px;width:601px;height:1px;background:#a0a0a0;"></div>
<div class="r" style="left:52px;top:896px;width:1px;height:22px;background:#a0a0a0;"></div>
<div class="r" style="left:152px;top:896px;width:1px;height:22px;background:#a0a0a0;"></div>
<div class="r" style="left:252px;top:896px;width:1px;height:22px;background:#a0a0a0;"></div>
<div class="r" style="left:352px;top:896px;width:1px;height:22px;background:#a0a0a0;"></div>
<div class="r" style="left:452px;top:896px;width:1px;height:22px;background:#a0a0a0;"></div>
<div class="r" style="left:552px;top:896px;width:1px;height:22px;background:#a0a0a0;"></div>
<div class="r" style="left:652px;top:896px;width:1px;height:22px;background:#a0a0a0;"></div>
<div class="t" style="left:56px;top:901px;font-size:12px;color:#ff0000;transform:scaleX(0.89);transform-origin:0 0;">180</div>
<div class="t" style="left:156px;top:901px;font-size:12px;color:#ff0000;transform:scaleX(0.875);transform-origin:0 0;">CANMIO-SVO101</div>
<div class="t" style="left:256px;top:901px;font-size:12px;color:#ff0000;transform:scaleX(0.875);transform-origin:0 0;">canmio-svo101-s...</div>
<div class="t" style="left:356px;top:901px;font-size:12px;color:#ff0000;transform:scaleX(0.875);transform-origin:0 0;">00 00 8E</div>
<div class="t" style="right:1369px;top:901px;font-size:12px;color:#ff0000;transform:scaleX(0.89);transform-origin:100% 0;">256</div>
<div class="t" style="right:1269px;top:901px;font-size:12px;color:#ff0000;transform:scaleX(0.89);transform-origin:100% 0;">25620</div>
<div class="r" style="left:12px;top:918px;width:40px;height:22px;background:#ffffff;"></div>
<div class="r" style="left:14px;top:939px;width:38px;height:1px;background:#e8e8e8;"></div>
<div class="r" style="left:53px;top:918px;width:600px;height:22px;background:#ffffff;"></div>
<div class="r" style="left:52px;top:939px;width:601px;height:1px;background:#a0a0a0;"></div>
<div class="r" style="left:52px;top:918px;width:1px;height:22px;background:#a0a0a0;"></div>
<div class="r" style="left:152px;top:918px;width:1px;height:22px;background:#a0a0a0;"></div>
<div class="r" style="left:252px;top:918px;width:1px;height:22px;background:#a0a0a0;"></div>
<div class="r" style="left:352px;top:918px;width:1px;height:22px;background:#a0a0a0;"></div>
<div class="r" style="left:452px;top:918px;width:1px;height:22px;background:#a0a0a0;"></div>
<div class="r" style="left:552px;top:918px;width:1px;height:22px;background:#a0a0a0;"></div>
<div class="r" style="left:652px;top:918px;width:1px;height:22px;background:#a0a0a0;"></div>
<div class="t" style="left:56px;top:923px;font-size:12px;color:#ff0000;transform:scaleX(0.89);transform-origin:0 0;">181</div>
<div class="t" style="left:156px;top:923px;font-size:12px;color:#ff0000;transform:scaleX(0.875);transform-origin:0 0;">CANMIO-SVO101</div>
<div class="t" style="left:256px;top:923px;font-size:12px;color:#ff0000;transform:scaleX(0.875);transform-origin:0 0;">canmio-svo101-s...</div>
<div class="t" style="left:356px;top:923px;font-size:12px;color:#ff0000;transform:scaleX(0.875);transform-origin:0 0;">00 00 8D</div>
<div class="t" style="right:1369px;top:923px;font-size:12px;color:#ff0000;transform:scaleX(0.89);transform-origin:100% 0;">256</div>
<div class="t" style="right:1269px;top:923px;font-size:12px;color:#ff0000;transform:scaleX(0.89);transform-origin:100% 0;">25621</div>
<div class="r" style="left:12px;top:940px;width:40px;height:22px;background:#ffffff;"></div>
<div class="r" style="left:14px;top:961px;width:38px;height:1px;background:#e8e8e8;"></div>
<div class="r" style="left:53px;top:940px;width:600px;height:22px;background:#ffffff;"></div>
<div class="r" style="left:52px;top:961px;width:601px;height:1px;background:#a0a0a0;"></div>
<div class="r" style="left:52px;top:940px;width:1px;height:22px;background:#a0a0a0;"></div>
<div class="r" style="left:152px;top:940px;width:1px;height:22px;background:#a0a0a0;"></div>
<div class="r" style="left:252px;top:940px;width:1px;height:22px;background:#a0a0a0;"></div>
<div class="r" style="left:352px;top:940px;width:1px;height:22px;background:#a0a0a0;"></div>
<div class="r" style="left:452px;top:940px;width:1px;height:22px;background:#a0a0a0;"></div>
<div class="r" style="left:552px;top:940px;width:1px;height:22px;background:#a0a0a0;"></div>
<div class="r" style="left:652px;top:940px;width:1px;height:22px;background:#a0a0a0;"></div>
<div class="t" style="left:56px;top:945px;font-size:12px;color:#ff0000;transform:scaleX(0.89);transform-origin:0 0;">182</div>
<div class="t" style="left:156px;top:945px;font-size:12px;color:#ff0000;transform:scaleX(0.875);transform-origin:0 0;">CANMIO-SVO101</div>
<div class="t" style="left:256px;top:945px;font-size:12px;color:#ff0000;transform:scaleX(0.875);transform-origin:0 0;">canmio-svo101-s...</div>
<div class="t" style="left:356px;top:945px;font-size:12px;color:#ff0000;transform:scaleX(0.89);transform-origin:0 0;">00 00 90</div>
<div class="t" style="right:1369px;top:945px;font-size:12px;color:#ff0000;transform:scaleX(0.89);transform-origin:100% 0;">256</div>
<div class="t" style="right:1269px;top:945px;font-size:12px;color:#ff0000;transform:scaleX(0.89);transform-origin:100% 0;">25622</div>
<div class="r" style="left:12px;top:962px;width:40px;height:22px;background:#ffffff;"></div>
<div class="r" style="left:14px;top:983px;width:38px;height:1px;background:#e8e8e8;"></div>
<div class="r" style="left:53px;top:962px;width:600px;height:22px;background:#ffffff;"></div>
<div class="r" style="left:52px;top:983px;width:601px;height:1px;background:#a0a0a0;"></div>
<div class="r" style="left:52px;top:962px;width:1px;height:22px;background:#a0a0a0;"></div>
<div class="r" style="left:152px;top:962px;width:1px;height:22px;background:#a0a0a0;"></div>
<div class="r" style="left:252px;top:962px;width:1px;height:22px;background:#a0a0a0;"></div>
<div class="r" style="left:352px;top:962px;width:1px;height:22px;background:#a0a0a0;"></div>
<div class="r" style="left:452px;top:962px;width:1px;height:22px;background:#a0a0a0;"></div>
<div class="r" style="left:552px;top:962px;width:1px;height:22px;background:#a0a0a0;"></div>
<div class="r" style="left:652px;top:962px;width:1px;height:22px;background:#a0a0a0;"></div>
<div class="t" style="left:56px;top:967px;font-size:12px;color:#ff0000;transform:scaleX(0.89);transform-origin:0 0;">183</div>
<div class="t" style="left:156px;top:967px;font-size:12px;color:#ff0000;transform:scaleX(0.875);transform-origin:0 0;">CANMIO-SVO101</div>
<div class="t" style="left:256px;top:967px;font-size:12px;color:#ff0000;transform:scaleX(0.875);transform-origin:0 0;">canmio-svo101-s...</div>
<div class="t" style="left:356px;top:967px;font-size:12px;color:#ff0000;transform:scaleX(0.89);transform-origin:0 0;">00 00 92</div>
<div class="t" style="right:1369px;top:967px;font-size:12px;color:#ff0000;transform:scaleX(0.89);transform-origin:100% 0;">256</div>
<div class="t" style="right:1269px;top:967px;font-size:12px;color:#ff0000;transform:scaleX(0.89);transform-origin:100% 0;">25623</div>
<div class="r" style="left:12px;top:984px;width:40px;height:19px;background:#ffffff;"></div>
<div class="r" style="left:53px;top:984px;width:600px;height:19px;background:#ffffff;"></div>
<div class="r" style="left:52px;top:984px;width:1px;height:19px;background:#a0a0a0;"></div>
<div class="r" style="left:152px;top:984px;width:1px;height:19px;background:#a0a0a0;"></div>
<div class="r" style="left:252px;top:984px;width:1px;height:19px;background:#a0a0a0;"></div>
<div class="r" style="left:352px;top:984px;width:1px;height:19px;background:#a0a0a0;"></div>
<div class="r" style="left:452px;top:984px;width:1px;height:19px;background:#a0a0a0;"></div>
<div class="r" style="left:552px;top:984px;width:1px;height:19px;background:#a0a0a0;"></div>
<div class="r" style="left:652px;top:984px;width:1px;height:19px;background:#a0a0a0;"></div>
<div class="t" style="left:56px;top:989px;font-size:12px;color:#ff0000;transform:scaleX(0.89);transform-origin:0 0;">184</div>
<div class="t" style="left:156px;top:989px;font-size:12px;color:#ff0000;transform:scaleX(0.875);transform-origin:0 0;">CANMIO-SVO101</div>
<div class="t" style="left:256px;top:989px;font-size:12px;color:#ff0000;transform:scaleX(0.875);transform-origin:0 0;">canmio-svo101-s...</div>
<div class="t" style="left:356px;top:989px;font-size:12px;color:#ff0000;transform:scaleX(0.89);transform-origin:0 0;">00 00 91</div>
<div class="t" style="right:1369px;top:989px;font-size:12px;color:#ff0000;transform:scaleX(0.89);transform-origin:100% 0;">256</div>
<div class="t" style="right:1269px;top:989px;font-size:12px;color:#ff0000;transform:scaleX(0.89);transform-origin:100% 0;">25624</div>
<div class="t" style="left:60px;top:478px;font-size:12px;color:#000;transform:scaleX(0.875);transform-origin:0 0;">Event Ref</div>
<div class="t" style="left:360px;top:478px;font-size:12px;color:#000;transform:scaleX(0.875);transform-origin:0 0;">Event Variables</div>
<div class="t" style="left:160px;top:471px;font-size:12px;color:#000;transform:scaleX(0.875);transform-origin:0 0;">Producer</div>
<div class="t" style="left:160px;top:484px;font-size:12px;color:#000;transform:scaleX(0.875);transform-origin:0 0;">Node</div>
<div class="t" style="left:260px;top:471px;font-size:12px;color:#000;transform:scaleX(0.875);transform-origin:0 0;">Event/Device</div>
<div class="t" style="left:260px;top:484px;font-size:12px;color:#000;transform:scaleX(0.875);transform-origin:0 0;">Name</div>
<div class="t" style="left:460px;top:471px;font-size:12px;color:#000;transform:scaleX(0.875);transform-origin:0 0;">Event Node</div>
<div class="t" style="left:460px;top:484px;font-size:12px;color:#000;transform:scaleX(0.875);transform-origin:0 0;">Number</div>
<div class="t" style="left:560px;top:471px;font-size:12px;color:#000;transform:scaleX(0.875);transform-origin:0 0;">Event/Device</div>
<div class="t" style="left:560px;top:484px;font-size:12px;color:#000;transform:scaleX(0.875);transform-origin:0 0;">Number</div>
<div class="r" style="left:1165px;top:467px;width:17px;height:536px;background:#ffffff;"></div>
<div class="r" style="left:1166px;top:467px;width:15px;height:535px;background:#f0f0f0;"></div>
<div class="r" style="left:1173px;top:480px;width:2px;height:298px;background:#858585;"></div>
<div class="t" style="left:1202px;top:82px;font-size:12px;color:#000;transform:scaleX(0.89);transform-origin:0 0;">Received messages 141</div>
<div class="r" style="left:1201px;top:99px;width:707px;height:316px;background:#828790;"></div>
<div class="r" style="left:1202px;top:100px;width:705px;height:314px;background:#ffffff;"></div>
<div class="r" style="left:1203px;top:101px;width:703px;height:312px;background:#ffffe0;"></div>
<div class="r" style="left:1889px;top:101px;width:1px;height:312px;background:#ffffff;"></div>
<div class="r" style="left:1890px;top:101px;width:16px;height:312px;background:#f0f0f0;"></div>
<div class="r" style="left:1897px;top:349px;width:2px;height:47px;background:#858585;"></div>
<div class="t" style="left:1205px;top:102px;font-size:12px;color:#000;transform:scaleX(0.903);transform-origin:0 0;">NEVAL Node 256  Event No 12 EV Index 3 Value 192</div>
<div class="t" style="left:1205px;top:115px;font-size:12px;color:#000;transform:scaleX(0.903);transform-origin:0 0;">NEVAL Node 256  Event No 13 EV Index 3 Value 130</div>
<div class="t" style="left:1205px;top:128px;font-size:12px;color:#000;transform:scaleX(0.903);transform-origin:0 0;">NEVAL Node 256  Event No 14 EV Index 3 Value 129</div>
<div class="t" style="left:1205px;top:141px;font-size:12px;color:#000;transform:scaleX(0.903);transform-origin:0 0;">NEVAL Node 256  Event No 15 EV Index 3 Value 128</div>
<div class="t" style="left:1205px;top:154px;font-size:12px;color:#000;transform:scaleX(0.903);transform-origin:0 0;">NEVAL Node 256  Event No 16 EV Index 3 Value 132</div>
<div class="t" style="left:1205px;top:167px;font-size:12px;color:#000;transform:scaleX(0.903);transform-origin:0 0;">NEVAL Node 256  Event No 17 EV Index 3 Value 134</div>
<div class="t" style="left:1205px;top:180px;font-size:12px;color:#000;transform:scaleX(0.903);transform-origin:0 0;">NEVAL Node 256  Event No 18 EV Index 3 Value 128</div>
<div class="t" style="left:1205px;top:193px;font-size:12px;color:#000;transform:scaleX(0.903);transform-origin:0 0;">NEVAL Node 256  Event No 19 EV Index 3 Value 133</div>
<div class="t" style="left:1205px;top:206px;font-size:12px;color:#000;transform:scaleX(0.903);transform-origin:0 0;">NEVAL Node 256  Event No 20 EV Index 3 Value 136</div>
<div class="t" style="left:1205px;top:219px;font-size:12px;color:#000;transform:scaleX(0.903);transform-origin:0 0;">NEVAL Node 256  Event No 21 EV Index 3 Value 138</div>
<div class="t" style="left:1205px;top:232px;font-size:12px;color:#000;transform:scaleX(0.903);transform-origin:0 0;">NEVAL Node 256  Event No 22 EV Index 3 Value 140</div>
<div class="t" style="left:1205px;top:245px;font-size:12px;color:#000;transform:scaleX(0.903);transform-origin:0 0;">NEVAL Node 256  Event No 23 EV Index 3 Value 142</div>
<div class="t" style="left:1205px;top:258px;font-size:12px;color:#000;transform:scaleX(0.903);transform-origin:0 0;">NEVAL Node 256  Event No 24 EV Index 3 Value 141</div>
<div class="t" style="left:1205px;top:271px;font-size:12px;color:#000;transform:scaleX(0.903);transform-origin:0 0;">NEVAL Node 256  Event No 25 EV Index 3 Value 144</div>
<div class="t" style="left:1205px;top:284px;font-size:12px;color:#000;transform:scaleX(0.903);transform-origin:0 0;">NEVAL Node 256  Event No 26 EV Index 3 Value 146</div>
<div class="t" style="left:1205px;top:297px;font-size:12px;color:#000;transform:scaleX(0.903);transform-origin:0 0;">NEVAL Node 256  Event No 27 EV Index 3 Value 145</div>
<div class="t" style="left:1205px;top:310px;font-size:12px;color:#000;transform:scaleX(0.903);transform-origin:0 0;">NEVAL Node 256  Event No 28 EV Index 3 Value 148</div>
<div class="t" style="left:1205px;top:323px;font-size:12px;color:#000;transform:scaleX(0.903);transform-origin:0 0;">NEVAL Node 256  Event No 29 EV Index 3 Value 150</div>
<div class="t" style="left:1205px;top:336px;font-size:12px;color:#000;transform:scaleX(0.903);transform-origin:0 0;">NEVAL Node 256  Event No 30 EV Index 3 Value 137</div>
<div class="t" style="left:1205px;top:349px;font-size:12px;color:#000;transform:scaleX(0.903);transform-origin:0 0;">NEVAL Node 256  Event No 31 EV Index 3 Value 149</div>
<div class="t" style="left:1205px;top:362px;font-size:12px;color:#000;transform:scaleX(0.903);transform-origin:0 0;">NEVAL Node 256  Event No 32 EV Index 3 Value 152</div>
<div class="t" style="left:1205px;top:375px;font-size:12px;color:#000;transform:scaleX(0.903);transform-origin:0 0;">NEVAL Node 256  Event No 33 EV Index 3 Value 154</div>
<div class="t" style="left:1205px;top:388px;font-size:12px;color:#000;transform:scaleX(0.903);transform-origin:0 0;">NEVAL Node 256  Event No 34 EV Index 3 Value 153</div>
<div class="r" style="left:1203px;top:400px;width:686px;height:13px;background:#0078d7;"></div>
<div class="t" style="left:1205px;top:401px;font-size:12px;color:#fff;transform:scaleX(0.903);transform-origin:0 0;">NEVAL Node 256  Event No 35 EV Index 3 Value 156</div>
<div class="r" style="left:1201px;top:465px;width:707px;height:433px;background:#828790;"></div>
<div class="r" style="left:1202px;top:466px;width:705px;height:431px;background:#ffffff;"></div>
<div class="r" style="left:1203px;top:467px;width:703px;height:429px;background:#ffffe0;"></div>
<div class="r" style="left:1889px;top:467px;width:1px;height:429px;background:#ffffff;"></div>
<div class="r" style="left:1890px;top:467px;width:16px;height:429px;background:#f0f0f0;"></div>
<div class="r" style="left:1897px;top:762px;width:2px;height:117px;background:#858585;"></div>
<div class="t" style="left:1205px;top:468px;font-size:12px;color:#000;transform:scaleX(0.903);transform-origin:0 0;">REVAL Node 256  Index 5 Value 3</div>
<div class="t" style="left:1205px;top:481px;font-size:12px;color:#000;transform:scaleX(0.903);transform-origin:0 0;">REVAL Node 256  Index 6 Value 3</div>
<div class="t" style="left:1205px;top:494px;font-size:12px;color:#000;transform:scaleX(0.903);transform-origin:0 0;">REVAL Node 256  Index 7 Value 3</div>
<div class="t" style="left:1205px;top:507px;font-size:12px;color:#000;transform:scaleX(0.903);transform-origin:0 0;">REVAL Node 256  Index 8 Value 3</div>
<div class="t" style="left:1205px;top:520px;font-size:12px;color:#000;transform:scaleX(0.903);transform-origin:0 0;">REVAL Node 256  Index 9 Value 3</div>
<div class="t" style="left:1205px;top:533px;font-size:12px;color:#000;transform:scaleX(0.903);transform-origin:0 0;">REVAL Node 256  Index 10 Value 3</div>
<div class="t" style="left:1205px;top:546px;font-size:12px;color:#000;transform:scaleX(0.903);transform-origin:0 0;">REVAL Node 256  Index 11 Value 3</div>
<div class="t" style="left:1205px;top:559px;font-size:12px;color:#000;transform:scaleX(0.903);transform-origin:0 0;">REVAL Node 256  Index 12 Value 3</div>
<div class="t" style="left:1205px;top:572px;font-size:12px;color:#000;transform:scaleX(0.903);transform-origin:0 0;">REVAL Node 256  Index 13 Value 3</div>
<div class="t" style="left:1205px;top:585px;font-size:12px;color:#000;transform:scaleX(0.903);transform-origin:0 0;">REVAL Node 256  Index 14 Value 3</div>
<div class="t" style="left:1205px;top:598px;font-size:12px;color:#000;transform:scaleX(0.903);transform-origin:0 0;">REVAL Node 256  Index 15 Value 3</div>
<div class="t" style="left:1205px;top:611px;font-size:12px;color:#000;transform:scaleX(0.903);transform-origin:0 0;">REVAL Node 256  Index 16 Value 3</div>
<div class="t" style="left:1205px;top:624px;font-size:12px;color:#000;transform:scaleX(0.903);transform-origin:0 0;">REVAL Node 256  Index 17 Value 3</div>
<div class="t" style="left:1205px;top:637px;font-size:12px;color:#000;transform:scaleX(0.903);transform-origin:0 0;">REVAL Node 256  Index 18 Value 3</div>
<div class="t" style="left:1205px;top:650px;font-size:12px;color:#000;transform:scaleX(0.903);transform-origin:0 0;">REVAL Node 256  Index 19 Value 3</div>
<div class="t" style="left:1205px;top:663px;font-size:12px;color:#000;transform:scaleX(0.903);transform-origin:0 0;">REVAL Node 256  Index 20 Value 3</div>
<div class="t" style="left:1205px;top:676px;font-size:12px;color:#000;transform:scaleX(0.903);transform-origin:0 0;">REVAL Node 256  Index 21 Value 3</div>
<div class="t" style="left:1205px;top:689px;font-size:12px;color:#000;transform:scaleX(0.903);transform-origin:0 0;">REVAL Node 256  Index 22 Value 3</div>
<div class="t" style="left:1205px;top:702px;font-size:12px;color:#000;transform:scaleX(0.903);transform-origin:0 0;">REVAL Node 256  Index 23 Value 3</div>
<div class="t" style="left:1205px;top:715px;font-size:12px;color:#000;transform:scaleX(0.903);transform-origin:0 0;">REVAL Node 256  Index 24 Value 3</div>
<div class="t" style="left:1205px;top:728px;font-size:12px;color:#000;transform:scaleX(0.903);transform-origin:0 0;">REVAL Node 256  Index 25 Value 3</div>
<div class="t" style="left:1205px;top:741px;font-size:12px;color:#000;transform:scaleX(0.903);transform-origin:0 0;">REVAL Node 256  Index 26 Value 3</div>
<div class="t" style="left:1205px;top:754px;font-size:12px;color:#000;transform:scaleX(0.903);transform-origin:0 0;">REVAL Node 256  Index 27 Value 3</div>
<div class="t" style="left:1205px;top:767px;font-size:12px;color:#000;transform:scaleX(0.903);transform-origin:0 0;">REVAL Node 256  Index 28 Value 3</div>
<div class="t" style="left:1205px;top:780px;font-size:12px;color:#000;transform:scaleX(0.903);transform-origin:0 0;">REVAL Node 256  Index 29 Value 3</div>
<div class="t" style="left:1205px;top:793px;font-size:12px;color:#000;transform:scaleX(0.903);transform-origin:0 0;">REVAL Node 256  Index 30 Value 3</div>
<div class="t" style="left:1205px;top:806px;font-size:12px;color:#000;transform:scaleX(0.903);transform-origin:0 0;">REVAL Node 256  Index 31 Value 3</div>
<div class="t" style="left:1205px;top:819px;font-size:12px;color:#000;transform:scaleX(0.903);transform-origin:0 0;">REVAL Node 256  Index 32 Value 3</div>
<div class="t" style="left:1205px;top:832px;font-size:12px;color:#000;transform:scaleX(0.903);transform-origin:0 0;">REVAL Node 256  Index 33 Value 3</div>
<div class="t" style="left:1205px;top:845px;font-size:12px;color:#000;transform:scaleX(0.903);transform-origin:0 0;">REVAL Node 256  Index 34 Value 3</div>
<div class="t" style="left:1205px;top:858px;font-size:12px;color:#000;transform:scaleX(0.903);transform-origin:0 0;">REVAL Node 256  Index 35 Value 3</div>
<div class="t" style="left:1205px;top:871px;font-size:12px;color:#000;transform:scaleX(0.903);transform-origin:0 0;">NNLRN Node 256</div>
<div class="r" style="left:1203px;top:883px;width:686px;height:13px;background:#0078d7;"></div>
<div class="t" style="left:1205px;top:884px;font-size:12px;color:#fff;transform:scaleX(0.903);transform-origin:0 0;">NNULN Node 256</div>
<div class="r" style="left:1203px;top:920px;width:85px;height:30px;background:#fdfdfd;border:1px solid #d0d0d0;border-bottom-color:#b8b8b8;border-radius:4px"></div>
<div class="t" style="left:1202px;width:85px;text-align:center;top:929px;font-size:12px;color:#000;transform:scaleX(0.86);transform-origin:50% 0">Freeze Msgs</div>
<div class="r" style="left:1394px;top:920px;width:85px;height:30px;background:#fdfdfd;border:1px solid #d0d0d0;border-bottom-color:#b8b8b8;border-radius:4px"></div>
<div class="t" style="left:1393px;width:85px;text-align:center;top:929px;font-size:12px;color:#000;transform:scaleX(0.86);transform-origin:50% 0">Clear Msgs</div>
<div class="r" style="left:1296px;top:962px;width:85px;height:30px;background:#fdfdfd;border:1px solid #d0d0d0;border-bottom-color:#b8b8b8;border-radius:4px"></div>
<div class="t" style="left:1295px;width:85px;text-align:center;top:971px;font-size:12px;color:#000;transform:scaleX(0.86);transform-origin:50% 0">Exit</div>
<div class="r" style="left:0px;top:1007px;width:1917px;height:1px;background:#dcdcdc;"></div>
<div class="r" style="left:-1px;top:1010px;width:135px;height:17px;background:#f0f0f0;border-left:1px solid #a0a0a0;border-top:1px solid #a0a0a0;border-right:1px solid #fff;border-bottom:1px solid #fff"></div>
<div class="t" style="left:2px;top:1014px;font-size:12px;color:#000;transform:scaleX(0.985);transform-origin:0 0;">Network: cbusserver-rpi</div>
<div class="r" style="left:136px;top:1010px;width:97px;height:17px;background:#f0f0f0;border-left:1px solid #a0a0a0;border-top:1px solid #a0a0a0;border-right:1px solid #fff;border-bottom:1px solid #fff"></div>
<div class="t" style="left:139px;top:1014px;font-size:12px;color:#000;transform:scaleX(0.926);transform-origin:0 0;">FCU CAN Id: 125</div>
<div class="r" style="left:234px;top:1010px;width:555px;height:17px;background:#f0f0f0;border-left:1px solid #a0a0a0;border-top:1px solid #a0a0a0;border-right:1px solid #fff;border-bottom:1px solid #fff"></div>
<div class="t" style="left:238px;top:1014px;font-size:12px;color:#000;transform:scaleX(0.939);transform-origin:0 0;">Base Node No: 256</div>
<div class="r" style="left:790px;top:1010px;width:555px;height:17px;background:#f0f0f0;border-left:1px solid #a0a0a0;border-top:1px solid #a0a0a0;border-right:1px solid #fff;border-bottom:1px solid #fff"></div>
<div class="t" style="left:793px;top:1014px;font-size:12px;color:#000;transform:scaleX(0.952);transform-origin:0 0;">Selected Node: CANMIO-SVO101</div>
<div class="r" style="left:1346px;top:1010px;width:555px;height:17px;background:#f0f0f0;border-left:1px solid #a0a0a0;border-top:1px solid #a0a0a0;border-right:1px solid #fff;border-bottom:1px solid #fff"></div>
<div class="r" style="left:727px;top:192px;width:726px;height:527px;background:#f0f0f0;border-radius:8px;box-shadow:0 0 0 1px rgba(0,0,0,0.09),0 3px 10px rgba(0,0,0,0.08),0 20px 40px rgba(0,0,0,0.36);overflow:hidden"><div class="r" style="left:0;top:0;width:100%;height:25px;background:#f1f3f8"></div></div>
<div class="t" style="left:730px;top:199px;font-size:12px;color:#000;transform:scaleX(0.96);transform-origin:0 0;">Edit Events for CANMIO-SVO: CANMIO-SVO101</div>
<div class="t" style="left:744px;top:247px;font-size:12px;color:#000;transform:scaleX(0.88);transform-origin:0 0;">Event Name</div>
<div class="r" style="left:874px;top:244px;width:305px;height:19px;background:#ffffe0;border-bottom:1px solid #7a7a7a"></div>
<div class="t" style="left:876px;top:247px;font-size:12px;color:#000;transform:scaleX(0.88);transform-origin:0 0;">canmio-svo101-servo1 Trhown</div>
<div class="r" style="left:739px;top:302px;width:683px;height:339px;background:#f9f9f9;border:1px solid #e0e0e0"></div>
<div class="r" style="left:739px;top:282px;width:98px;height:21px;background:#f9f9f9;border:1px solid #e0e0e0;border-bottom:none"></div>
<div class="t" style="left:747px;top:286px;font-size:12px;color:#000;transform:scaleX(0.88);transform-origin:0 0;">Produced Events</div>
<div class="r" style="left:778px;top:338px;width:248px;height:265px;background:transparent;border:1px solid #dcdcdc"></div>
<div class="r" style="left:784px;top:336px;width:81px;height:5px;background:#f9f9f9;"></div>
<div class="t" style="left:787px;top:333px;font-size:12px;color:#000;transform:scaleX(0.88);transform-origin:0 0;">Servo Selection</div>
<div class="r" style="left:1072px;top:338px;width:197px;height:143px;background:transparent;border:1px solid #dcdcdc"></div>
<div class="r" style="left:1078px;top:336px;width:61px;height:5px;background:#f9f9f9;"></div>
<div class="t" style="left:1081px;top:333px;font-size:12px;color:#000;transform:scaleX(0.88);transform-origin:0 0;">Event Type</div>
<svg class="r" style="left:795px;top:372px" width="13" height="13" viewBox="0 0 13 13"><circle cx="6.5" cy="6.5" r="6.5" fill="#005fb8"/><circle cx="6.5" cy="6.5" r="2.7" fill="#fff"/></svg>
<div class="t" style="left:814px;top:373px;font-size:12px;color:#000;transform:scaleX(0.88);transform-origin:0 0;">Servo 1</div>
<svg class="r" style="left:795px;top:400px" width="13" height="13" viewBox="0 0 13 13"><circle cx="6.5" cy="6.5" r="6" fill="#f3f3f3" stroke="#5f5f5f" stroke-width="1"/></svg>
<div class="t" style="left:814px;top:401px;font-size:12px;color:#000;transform:scaleX(0.88);transform-origin:0 0;">Servo 2</div>
<svg class="r" style="left:795px;top:428px" width="13" height="13" viewBox="0 0 13 13"><circle cx="6.5" cy="6.5" r="6" fill="#f3f3f3" stroke="#5f5f5f" stroke-width="1"/></svg>
<div class="t" style="left:814px;top:429px;font-size:12px;color:#000;transform:scaleX(0.88);transform-origin:0 0;">Servo 3</div>
<svg class="r" style="left:795px;top:456px" width="13" height="13" viewBox="0 0 13 13"><circle cx="6.5" cy="6.5" r="6" fill="#f3f3f3" stroke="#5f5f5f" stroke-width="1"/></svg>
<div class="t" style="left:814px;top:457px;font-size:12px;color:#000;transform:scaleX(0.88);transform-origin:0 0;">Servo 4</div>
<svg class="r" style="left:795px;top:484px" width="13" height="13" viewBox="0 0 13 13"><circle cx="6.5" cy="6.5" r="6" fill="#f3f3f3" stroke="#5f5f5f" stroke-width="1"/></svg>
<div class="t" style="left:814px;top:485px;font-size:12px;color:#000;transform:scaleX(0.88);transform-origin:0 0;">Servo 5</div>
<svg class="r" style="left:795px;top:512px" width="13" height="13" viewBox="0 0 13 13"><circle cx="6.5" cy="6.5" r="6" fill="#f3f3f3" stroke="#5f5f5f" stroke-width="1"/></svg>
<div class="t" style="left:814px;top:513px;font-size:12px;color:#000;transform:scaleX(0.88);transform-origin:0 0;">Servo 6</div>
<svg class="r" style="left:795px;top:540px" width="13" height="13" viewBox="0 0 13 13"><circle cx="6.5" cy="6.5" r="6" fill="#f3f3f3" stroke="#5f5f5f" stroke-width="1"/></svg>
<div class="t" style="left:814px;top:541px;font-size:12px;color:#000;transform:scaleX(0.88);transform-origin:0 0;">Servo 7</div>
<svg class="r" style="left:795px;top:568px" width="13" height="13" viewBox="0 0 13 13"><circle cx="6.5" cy="6.5" r="6" fill="#f3f3f3" stroke="#5f5f5f" stroke-width="1"/></svg>
<div class="t" style="left:814px;top:569px;font-size:12px;color:#000;transform:scaleX(0.88);transform-origin:0 0;">Servo 8</div>
<svg class="r" style="left:1091px;top:354px" width="13" height="13" viewBox="0 0 13 13"><circle cx="6.5" cy="6.5" r="6.5" fill="#005fb8"/><circle cx="6.5" cy="6.5" r="2.7" fill="#fff"/></svg>
<div class="t" style="left:1110px;top:355px;font-size:12px;color:#000;transform:scaleX(0.88);transform-origin:0 0;">End of Travel for ON Event</div>
<svg class="r" style="left:1091px;top:389px" width="13" height="13" viewBox="0 0 13 13"><circle cx="6.5" cy="6.5" r="6" fill="#f3f3f3" stroke="#5f5f5f" stroke-width="1"/></svg>
<div class="t" style="left:1110px;top:390px;font-size:12px;color:#000;transform:scaleX(0.88);transform-origin:0 0;">End of Travel for OFF Event</div>
<svg class="r" style="left:1091px;top:422px" width="13" height="13" viewBox="0 0 13 13"><circle cx="6.5" cy="6.5" r="6" fill="#f3f3f3" stroke="#5f5f5f" stroke-width="1"/></svg>
<div class="t" style="left:1110px;top:423px;font-size:12px;color:#000;transform:scaleX(0.88);transform-origin:0 0;">Mid Point Event</div>
<svg class="r" style="left:1091px;top:456px" width="13" height="13" viewBox="0 0 13 13"><circle cx="6.5" cy="6.5" r="6" fill="#f3f3f3" stroke="#5f5f5f" stroke-width="1"/></svg>
<div class="t" style="left:1110px;top:457px;font-size:12px;color:#000;transform:scaleX(0.88);transform-origin:0 0;">None</div>
<div class="r" style="left:1091px;top:512px;width:13px;height:13px;border:1px solid #5a5a5a;border-radius:3px;background:#f3f3f3"></div>
<div class="t" style="left:1110px;top:513px;font-size:12px;color:#000;transform:scaleX(0.88);transform-origin:0 0;">Event Polarity Inverted</div>
<div class="r" style="left:911px;top:669px;width:113px;height:27px;background:#fdfdfd;border:1px solid #0067c0;border-bottom-color:#0067c0;border-radius:4px"></div>
<div class="t" style="left:910px;width:113px;text-align:center;top:677px;font-size:12px;color:#000;transform:scaleX(0.88);transform-origin:50% 0">OK</div>
<div class="r" style="left:1162px;top:666px;width:113px;height:27px;background:#fdfdfd;border:1px solid #d0d0d0;border-bottom-color:#b8b8b8;border-radius:4px"></div>
<div class="t" style="left:1161px;width:113px;text-align:center;top:674px;font-size:12px;color:#000;transform:scaleX(0.88);transform-origin:50% 0">Cancel</div></body></html>
